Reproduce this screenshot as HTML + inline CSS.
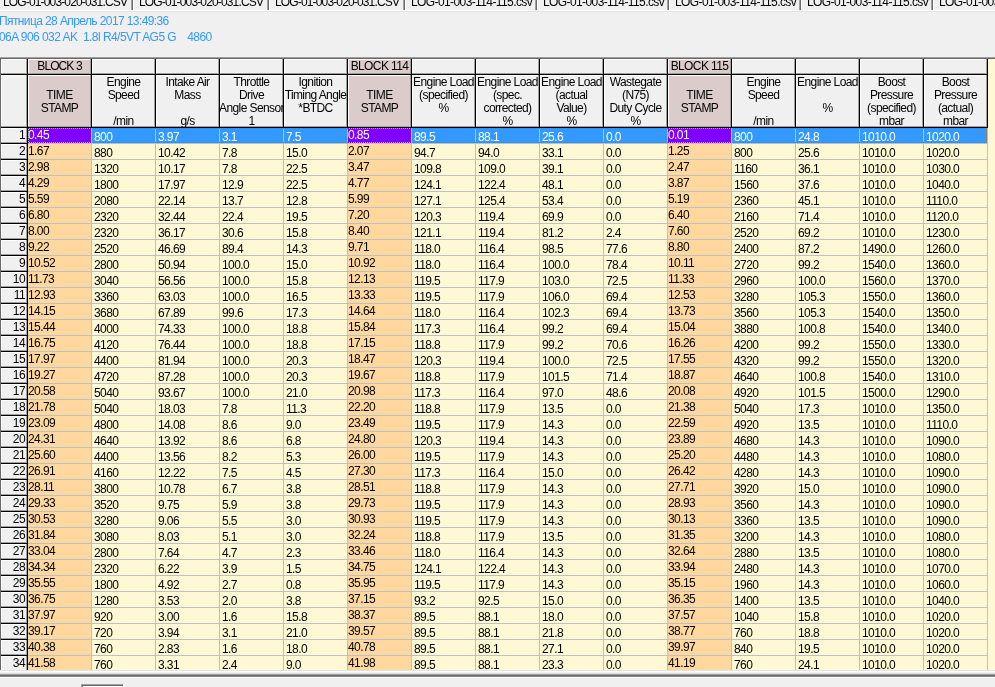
<!DOCTYPE html>
<html><head><meta charset="utf-8"><style>
html,body{margin:0;padding:0}
body{width:995px;height:687px;position:relative;overflow:hidden;background:#f0f0f0;font-family:"Liberation Sans",sans-serif}
#w{position:absolute;left:0;top:0;width:995px;height:687px;overflow:hidden;will-change:transform}
i{position:absolute;display:block}
.t{position:absolute;font-weight:normal;font-size:12px;letter-spacing:-0.6px;line-height:15px;white-space:pre;color:#000}
.c{text-align:center}
.clip{position:absolute;overflow:hidden}
</style></head><body><div id="w">
<b class="t" style="left:3px;top:-5px;letter-spacing:-0.85px">LOG-01-003-020-031.CSV</b><b class="t" style="left:139px;top:-5px;letter-spacing:-0.85px">LOG-01-003-020-031.CSV</b><b class="t" style="left:275px;top:-5px;letter-spacing:-0.85px">LOG-01-003-020-031.CSV</b><b class="t" style="left:411px;top:-5px;letter-spacing:-0.6px">LOG-01-003-114-115.csv</b><b class="t" style="left:543px;top:-5px;letter-spacing:-0.6px">LOG-01-003-114-115.csv</b><b class="t" style="left:675px;top:-5px;letter-spacing:-0.6px">LOG-01-003-114-115.csv</b><b class="t" style="left:807px;top:-5px;letter-spacing:-0.6px">LOG-01-003-114-115.csv</b><b class="t" style="left:939px;top:-5px;letter-spacing:-0.6px">LOG-01-003-114-115.csv</b><i style="left:131px;top:0px;width:1px;height:10px;background:#a0a0a0"></i><i style="left:132px;top:0px;width:1px;height:10px;background:#696969"></i><i style="left:133px;top:0px;width:1px;height:10px;background:#fff"></i><i style="left:267px;top:0px;width:1px;height:10px;background:#a0a0a0"></i><i style="left:268px;top:0px;width:1px;height:10px;background:#696969"></i><i style="left:269px;top:0px;width:1px;height:10px;background:#fff"></i><i style="left:403px;top:0px;width:1px;height:10px;background:#a0a0a0"></i><i style="left:404px;top:0px;width:1px;height:10px;background:#696969"></i><i style="left:405px;top:0px;width:1px;height:10px;background:#fff"></i><i style="left:535px;top:0px;width:1px;height:10px;background:#a0a0a0"></i><i style="left:536px;top:0px;width:1px;height:10px;background:#696969"></i><i style="left:537px;top:0px;width:1px;height:10px;background:#fff"></i><i style="left:667px;top:0px;width:1px;height:10px;background:#a0a0a0"></i><i style="left:668px;top:0px;width:1px;height:10px;background:#696969"></i><i style="left:669px;top:0px;width:1px;height:10px;background:#fff"></i><i style="left:799px;top:0px;width:1px;height:10px;background:#a0a0a0"></i><i style="left:800px;top:0px;width:1px;height:10px;background:#696969"></i><i style="left:801px;top:0px;width:1px;height:10px;background:#fff"></i><i style="left:931px;top:0px;width:1px;height:10px;background:#a0a0a0"></i><i style="left:932px;top:0px;width:1px;height:10px;background:#696969"></i><i style="left:933px;top:0px;width:1px;height:10px;background:#fff"></i><i style="left:0px;top:10px;width:995px;height:1px;background:#fff"></i><i style="left:0px;top:11px;width:995px;height:1px;background:#e3e3e3"></i><b class="t" style="left:-1px;top:14px;color:#3399ff">Пятница 28 Апрель 2017 13:49:36</b><b class="t" style="left:-1px;top:30px;letter-spacing:-0.55px;color:#3399ff">06A 906 032 AK  1.8l R4/5VT AG5 G    4860</b><i style="left:0px;top:57px;width:995px;height:1px;background:#a0a0a0"></i><i style="left:0px;top:58px;width:995px;height:1px;background:#696969"></i><i style="left:0px;top:59px;width:1px;height:611px;background:#696969"></i><i style="left:1px;top:59px;width:994px;height:611px;background:#fff8d5"></i><i style="left:27px;top:59px;width:1px;height:69px;background:#000"></i><i style="left:91px;top:59px;width:1px;height:69px;background:#000"></i><i style="left:155px;top:59px;width:1px;height:69px;background:#000"></i><i style="left:219px;top:59px;width:1px;height:69px;background:#000"></i><i style="left:283px;top:59px;width:1px;height:69px;background:#000"></i><i style="left:347px;top:59px;width:1px;height:69px;background:#000"></i><i style="left:411px;top:59px;width:1px;height:69px;background:#000"></i><i style="left:475px;top:59px;width:1px;height:69px;background:#000"></i><i style="left:539px;top:59px;width:1px;height:69px;background:#000"></i><i style="left:603px;top:59px;width:1px;height:69px;background:#000"></i><i style="left:667px;top:59px;width:1px;height:69px;background:#000"></i><i style="left:731px;top:59px;width:1px;height:69px;background:#000"></i><i style="left:795px;top:59px;width:1px;height:69px;background:#000"></i><i style="left:859px;top:59px;width:1px;height:69px;background:#000"></i><i style="left:923px;top:59px;width:1px;height:69px;background:#000"></i><i style="left:987px;top:59px;width:1px;height:69px;background:#000"></i><i style="left:1px;top:74px;width:987px;height:1px;background:#000"></i><i style="left:1px;top:127px;width:987px;height:1px;background:#000"></i><i style="left:1px;top:59px;width:26px;height:15px;background:#f0f0f0"></i><i style="left:1px;top:59px;width:26px;height:1px;background:#fff"></i><i style="left:1px;top:59px;width:1px;height:15px;background:#fff"></i><i style="left:1px;top:73px;width:26px;height:1px;background:#a0a0a0"></i><i style="left:26px;top:59px;width:1px;height:15px;background:#a0a0a0"></i><i style="left:1px;top:75px;width:26px;height:52px;background:#f0f0f0"></i><i style="left:1px;top:75px;width:26px;height:1px;background:#fff"></i><i style="left:1px;top:75px;width:1px;height:52px;background:#fff"></i><i style="left:1px;top:126px;width:26px;height:1px;background:#a0a0a0"></i><i style="left:26px;top:75px;width:1px;height:52px;background:#a0a0a0"></i><i style="left:28px;top:59px;width:63px;height:15px;background:#dbcbcb"></i><i style="left:28px;top:59px;width:63px;height:1px;background:#fff"></i><i style="left:28px;top:59px;width:1px;height:15px;background:#fff"></i><i style="left:28px;top:73px;width:63px;height:1px;background:#a0a0a0"></i><i style="left:90px;top:59px;width:1px;height:15px;background:#a0a0a0"></i><i style="left:28px;top:75px;width:63px;height:52px;background:#dbcbcb"></i><i style="left:28px;top:75px;width:63px;height:1px;background:#fff"></i><i style="left:28px;top:75px;width:1px;height:52px;background:#fff"></i><i style="left:28px;top:126px;width:63px;height:1px;background:#a0a0a0"></i><i style="left:90px;top:75px;width:1px;height:52px;background:#a0a0a0"></i><i style="left:92px;top:59px;width:63px;height:15px;background:#f0f0f0"></i><i style="left:92px;top:59px;width:63px;height:1px;background:#fff"></i><i style="left:92px;top:59px;width:1px;height:15px;background:#fff"></i><i style="left:92px;top:73px;width:63px;height:1px;background:#a0a0a0"></i><i style="left:154px;top:59px;width:1px;height:15px;background:#a0a0a0"></i><i style="left:92px;top:75px;width:63px;height:52px;background:#f0f0f0"></i><i style="left:92px;top:75px;width:63px;height:1px;background:#fff"></i><i style="left:92px;top:75px;width:1px;height:52px;background:#fff"></i><i style="left:92px;top:126px;width:63px;height:1px;background:#a0a0a0"></i><i style="left:154px;top:75px;width:1px;height:52px;background:#a0a0a0"></i><i style="left:156px;top:59px;width:63px;height:15px;background:#f0f0f0"></i><i style="left:156px;top:59px;width:63px;height:1px;background:#fff"></i><i style="left:156px;top:59px;width:1px;height:15px;background:#fff"></i><i style="left:156px;top:73px;width:63px;height:1px;background:#a0a0a0"></i><i style="left:218px;top:59px;width:1px;height:15px;background:#a0a0a0"></i><i style="left:156px;top:75px;width:63px;height:52px;background:#f0f0f0"></i><i style="left:156px;top:75px;width:63px;height:1px;background:#fff"></i><i style="left:156px;top:75px;width:1px;height:52px;background:#fff"></i><i style="left:156px;top:126px;width:63px;height:1px;background:#a0a0a0"></i><i style="left:218px;top:75px;width:1px;height:52px;background:#a0a0a0"></i><i style="left:220px;top:59px;width:63px;height:15px;background:#f0f0f0"></i><i style="left:220px;top:59px;width:63px;height:1px;background:#fff"></i><i style="left:220px;top:59px;width:1px;height:15px;background:#fff"></i><i style="left:220px;top:73px;width:63px;height:1px;background:#a0a0a0"></i><i style="left:282px;top:59px;width:1px;height:15px;background:#a0a0a0"></i><i style="left:220px;top:75px;width:63px;height:52px;background:#f0f0f0"></i><i style="left:220px;top:75px;width:63px;height:1px;background:#fff"></i><i style="left:220px;top:75px;width:1px;height:52px;background:#fff"></i><i style="left:220px;top:126px;width:63px;height:1px;background:#a0a0a0"></i><i style="left:282px;top:75px;width:1px;height:52px;background:#a0a0a0"></i><i style="left:284px;top:59px;width:63px;height:15px;background:#f0f0f0"></i><i style="left:284px;top:59px;width:63px;height:1px;background:#fff"></i><i style="left:284px;top:59px;width:1px;height:15px;background:#fff"></i><i style="left:284px;top:73px;width:63px;height:1px;background:#a0a0a0"></i><i style="left:346px;top:59px;width:1px;height:15px;background:#a0a0a0"></i><i style="left:284px;top:75px;width:63px;height:52px;background:#f0f0f0"></i><i style="left:284px;top:75px;width:63px;height:1px;background:#fff"></i><i style="left:284px;top:75px;width:1px;height:52px;background:#fff"></i><i style="left:284px;top:126px;width:63px;height:1px;background:#a0a0a0"></i><i style="left:346px;top:75px;width:1px;height:52px;background:#a0a0a0"></i><i style="left:348px;top:59px;width:63px;height:15px;background:#dbcbcb"></i><i style="left:348px;top:59px;width:63px;height:1px;background:#fff"></i><i style="left:348px;top:59px;width:1px;height:15px;background:#fff"></i><i style="left:348px;top:73px;width:63px;height:1px;background:#a0a0a0"></i><i style="left:410px;top:59px;width:1px;height:15px;background:#a0a0a0"></i><i style="left:348px;top:75px;width:63px;height:52px;background:#dbcbcb"></i><i style="left:348px;top:75px;width:63px;height:1px;background:#fff"></i><i style="left:348px;top:75px;width:1px;height:52px;background:#fff"></i><i style="left:348px;top:126px;width:63px;height:1px;background:#a0a0a0"></i><i style="left:410px;top:75px;width:1px;height:52px;background:#a0a0a0"></i><i style="left:412px;top:59px;width:63px;height:15px;background:#f0f0f0"></i><i style="left:412px;top:59px;width:63px;height:1px;background:#fff"></i><i style="left:412px;top:59px;width:1px;height:15px;background:#fff"></i><i style="left:412px;top:73px;width:63px;height:1px;background:#a0a0a0"></i><i style="left:474px;top:59px;width:1px;height:15px;background:#a0a0a0"></i><i style="left:412px;top:75px;width:63px;height:52px;background:#f0f0f0"></i><i style="left:412px;top:75px;width:63px;height:1px;background:#fff"></i><i style="left:412px;top:75px;width:1px;height:52px;background:#fff"></i><i style="left:412px;top:126px;width:63px;height:1px;background:#a0a0a0"></i><i style="left:474px;top:75px;width:1px;height:52px;background:#a0a0a0"></i><i style="left:476px;top:59px;width:63px;height:15px;background:#f0f0f0"></i><i style="left:476px;top:59px;width:63px;height:1px;background:#fff"></i><i style="left:476px;top:59px;width:1px;height:15px;background:#fff"></i><i style="left:476px;top:73px;width:63px;height:1px;background:#a0a0a0"></i><i style="left:538px;top:59px;width:1px;height:15px;background:#a0a0a0"></i><i style="left:476px;top:75px;width:63px;height:52px;background:#f0f0f0"></i><i style="left:476px;top:75px;width:63px;height:1px;background:#fff"></i><i style="left:476px;top:75px;width:1px;height:52px;background:#fff"></i><i style="left:476px;top:126px;width:63px;height:1px;background:#a0a0a0"></i><i style="left:538px;top:75px;width:1px;height:52px;background:#a0a0a0"></i><i style="left:540px;top:59px;width:63px;height:15px;background:#f0f0f0"></i><i style="left:540px;top:59px;width:63px;height:1px;background:#fff"></i><i style="left:540px;top:59px;width:1px;height:15px;background:#fff"></i><i style="left:540px;top:73px;width:63px;height:1px;background:#a0a0a0"></i><i style="left:602px;top:59px;width:1px;height:15px;background:#a0a0a0"></i><i style="left:540px;top:75px;width:63px;height:52px;background:#f0f0f0"></i><i style="left:540px;top:75px;width:63px;height:1px;background:#fff"></i><i style="left:540px;top:75px;width:1px;height:52px;background:#fff"></i><i style="left:540px;top:126px;width:63px;height:1px;background:#a0a0a0"></i><i style="left:602px;top:75px;width:1px;height:52px;background:#a0a0a0"></i><i style="left:604px;top:59px;width:63px;height:15px;background:#f0f0f0"></i><i style="left:604px;top:59px;width:63px;height:1px;background:#fff"></i><i style="left:604px;top:59px;width:1px;height:15px;background:#fff"></i><i style="left:604px;top:73px;width:63px;height:1px;background:#a0a0a0"></i><i style="left:666px;top:59px;width:1px;height:15px;background:#a0a0a0"></i><i style="left:604px;top:75px;width:63px;height:52px;background:#f0f0f0"></i><i style="left:604px;top:75px;width:63px;height:1px;background:#fff"></i><i style="left:604px;top:75px;width:1px;height:52px;background:#fff"></i><i style="left:604px;top:126px;width:63px;height:1px;background:#a0a0a0"></i><i style="left:666px;top:75px;width:1px;height:52px;background:#a0a0a0"></i><i style="left:668px;top:59px;width:63px;height:15px;background:#dbcbcb"></i><i style="left:668px;top:59px;width:63px;height:1px;background:#fff"></i><i style="left:668px;top:59px;width:1px;height:15px;background:#fff"></i><i style="left:668px;top:73px;width:63px;height:1px;background:#a0a0a0"></i><i style="left:730px;top:59px;width:1px;height:15px;background:#a0a0a0"></i><i style="left:668px;top:75px;width:63px;height:52px;background:#dbcbcb"></i><i style="left:668px;top:75px;width:63px;height:1px;background:#fff"></i><i style="left:668px;top:75px;width:1px;height:52px;background:#fff"></i><i style="left:668px;top:126px;width:63px;height:1px;background:#a0a0a0"></i><i style="left:730px;top:75px;width:1px;height:52px;background:#a0a0a0"></i><i style="left:732px;top:59px;width:63px;height:15px;background:#f0f0f0"></i><i style="left:732px;top:59px;width:63px;height:1px;background:#fff"></i><i style="left:732px;top:59px;width:1px;height:15px;background:#fff"></i><i style="left:732px;top:73px;width:63px;height:1px;background:#a0a0a0"></i><i style="left:794px;top:59px;width:1px;height:15px;background:#a0a0a0"></i><i style="left:732px;top:75px;width:63px;height:52px;background:#f0f0f0"></i><i style="left:732px;top:75px;width:63px;height:1px;background:#fff"></i><i style="left:732px;top:75px;width:1px;height:52px;background:#fff"></i><i style="left:732px;top:126px;width:63px;height:1px;background:#a0a0a0"></i><i style="left:794px;top:75px;width:1px;height:52px;background:#a0a0a0"></i><i style="left:796px;top:59px;width:63px;height:15px;background:#f0f0f0"></i><i style="left:796px;top:59px;width:63px;height:1px;background:#fff"></i><i style="left:796px;top:59px;width:1px;height:15px;background:#fff"></i><i style="left:796px;top:73px;width:63px;height:1px;background:#a0a0a0"></i><i style="left:858px;top:59px;width:1px;height:15px;background:#a0a0a0"></i><i style="left:796px;top:75px;width:63px;height:52px;background:#f0f0f0"></i><i style="left:796px;top:75px;width:63px;height:1px;background:#fff"></i><i style="left:796px;top:75px;width:1px;height:52px;background:#fff"></i><i style="left:796px;top:126px;width:63px;height:1px;background:#a0a0a0"></i><i style="left:858px;top:75px;width:1px;height:52px;background:#a0a0a0"></i><i style="left:860px;top:59px;width:63px;height:15px;background:#f0f0f0"></i><i style="left:860px;top:59px;width:63px;height:1px;background:#fff"></i><i style="left:860px;top:59px;width:1px;height:15px;background:#fff"></i><i style="left:860px;top:73px;width:63px;height:1px;background:#a0a0a0"></i><i style="left:922px;top:59px;width:1px;height:15px;background:#a0a0a0"></i><i style="left:860px;top:75px;width:63px;height:52px;background:#f0f0f0"></i><i style="left:860px;top:75px;width:63px;height:1px;background:#fff"></i><i style="left:860px;top:75px;width:1px;height:52px;background:#fff"></i><i style="left:860px;top:126px;width:63px;height:1px;background:#a0a0a0"></i><i style="left:922px;top:75px;width:1px;height:52px;background:#a0a0a0"></i><i style="left:924px;top:59px;width:63px;height:15px;background:#f0f0f0"></i><i style="left:924px;top:59px;width:63px;height:1px;background:#fff"></i><i style="left:924px;top:59px;width:1px;height:15px;background:#fff"></i><i style="left:924px;top:73px;width:63px;height:1px;background:#a0a0a0"></i><i style="left:986px;top:59px;width:1px;height:15px;background:#a0a0a0"></i><i style="left:924px;top:75px;width:63px;height:52px;background:#f0f0f0"></i><i style="left:924px;top:75px;width:63px;height:1px;background:#fff"></i><i style="left:924px;top:75px;width:1px;height:52px;background:#fff"></i><i style="left:924px;top:126px;width:63px;height:1px;background:#a0a0a0"></i><i style="left:986px;top:75px;width:1px;height:52px;background:#a0a0a0"></i><div class="clip" style="left:28px;top:59px;width:63px;height:15px"><b class="t c" style="left:-5px;letter-spacing:-0.9px;top:0px;width:73px">BLOCK 3</b></div><div class="clip" style="left:28px;top:75px;width:63px;height:52px"><b class="t c" style="left:-20px;top:13px;width:103px">TIME</b><b class="t c" style="left:-20px;top:26px;width:103px">STAMP</b></div><div class="clip" style="left:92px;top:59px;width:63px;height:15px"></div><div class="clip" style="left:92px;top:75px;width:63px;height:52px"><b class="t c" style="left:-20px;top:0px;width:103px">Engine</b><b class="t c" style="left:-20px;top:13px;width:103px">Speed</b><b class="t c" style="left:-20px;top:39px;width:103px">/min</b></div><div class="clip" style="left:156px;top:59px;width:63px;height:15px"></div><div class="clip" style="left:156px;top:75px;width:63px;height:52px"><b class="t c" style="left:-20px;top:0px;width:103px">Intake Air</b><b class="t c" style="left:-20px;top:13px;width:103px">Mass</b><b class="t c" style="left:-20px;top:39px;width:103px">g/s</b></div><div class="clip" style="left:220px;top:59px;width:63px;height:15px"></div><div class="clip" style="left:220px;top:75px;width:63px;height:52px"><b class="t c" style="left:-20px;top:0px;width:103px">Throttle</b><b class="t c" style="left:-20px;top:13px;width:103px">Drive</b><b class="t c" style="left:-20px;top:26px;width:103px">Angle Sensor</b><b class="t c" style="left:-20px;top:39px;width:103px">1</b></div><div class="clip" style="left:284px;top:59px;width:63px;height:15px"></div><div class="clip" style="left:284px;top:75px;width:63px;height:52px"><b class="t c" style="left:-20px;top:0px;width:103px">Ignition</b><b class="t c" style="left:-20px;top:13px;width:103px">Timing Angle</b><b class="t c" style="left:-20px;top:26px;width:103px">*BTDC</b></div><div class="clip" style="left:348px;top:59px;width:63px;height:15px"><b class="t c" style="left:-5px;letter-spacing:-0.6px;top:0px;width:73px">BLOCK 114</b></div><div class="clip" style="left:348px;top:75px;width:63px;height:52px"><b class="t c" style="left:-20px;top:13px;width:103px">TIME</b><b class="t c" style="left:-20px;top:26px;width:103px">STAMP</b></div><div class="clip" style="left:412px;top:59px;width:63px;height:15px"></div><div class="clip" style="left:412px;top:75px;width:63px;height:52px"><b class="t c" style="left:-20px;top:0px;width:103px">Engine Load</b><b class="t c" style="left:-20px;top:13px;width:103px">(specified)</b><b class="t c" style="left:-20px;top:26px;width:103px">%</b></div><div class="clip" style="left:476px;top:59px;width:63px;height:15px"></div><div class="clip" style="left:476px;top:75px;width:63px;height:52px"><b class="t c" style="left:-20px;top:0px;width:103px">Engine Load</b><b class="t c" style="left:-20px;top:13px;width:103px">(spec.</b><b class="t c" style="left:-20px;top:26px;width:103px">corrected)</b><b class="t c" style="left:-20px;top:39px;width:103px">%</b></div><div class="clip" style="left:540px;top:59px;width:63px;height:15px"></div><div class="clip" style="left:540px;top:75px;width:63px;height:52px"><b class="t c" style="left:-20px;top:0px;width:103px">Engine Load</b><b class="t c" style="left:-20px;top:13px;width:103px">(actual</b><b class="t c" style="left:-20px;top:26px;width:103px">Value)</b><b class="t c" style="left:-20px;top:39px;width:103px">%</b></div><div class="clip" style="left:604px;top:59px;width:63px;height:15px"></div><div class="clip" style="left:604px;top:75px;width:63px;height:52px"><b class="t c" style="left:-20px;top:0px;width:103px">Wastegate</b><b class="t c" style="left:-20px;top:13px;width:103px">(N75)</b><b class="t c" style="left:-20px;top:26px;width:103px">Duty Cycle</b><b class="t c" style="left:-20px;top:39px;width:103px">%</b></div><div class="clip" style="left:668px;top:59px;width:63px;height:15px"><b class="t c" style="left:-5px;letter-spacing:-0.6px;top:0px;width:73px">BLOCK 115</b></div><div class="clip" style="left:668px;top:75px;width:63px;height:52px"><b class="t c" style="left:-20px;top:13px;width:103px">TIME</b><b class="t c" style="left:-20px;top:26px;width:103px">STAMP</b></div><div class="clip" style="left:732px;top:59px;width:63px;height:15px"></div><div class="clip" style="left:732px;top:75px;width:63px;height:52px"><b class="t c" style="left:-20px;top:0px;width:103px">Engine</b><b class="t c" style="left:-20px;top:13px;width:103px">Speed</b><b class="t c" style="left:-20px;top:39px;width:103px">/min</b></div><div class="clip" style="left:796px;top:59px;width:63px;height:15px"></div><div class="clip" style="left:796px;top:75px;width:63px;height:52px"><b class="t c" style="left:-20px;top:0px;width:103px">Engine Load</b><b class="t c" style="left:-20px;top:26px;width:103px">%</b></div><div class="clip" style="left:860px;top:59px;width:63px;height:15px"></div><div class="clip" style="left:860px;top:75px;width:63px;height:52px"><b class="t c" style="left:-20px;top:0px;width:103px">Boost</b><b class="t c" style="left:-20px;top:13px;width:103px">Pressure</b><b class="t c" style="left:-20px;top:26px;width:103px">(specified)</b><b class="t c" style="left:-20px;top:39px;width:103px">mbar</b></div><div class="clip" style="left:924px;top:59px;width:63px;height:15px"></div><div class="clip" style="left:924px;top:75px;width:63px;height:52px"><b class="t c" style="left:-20px;top:0px;width:103px">Boost</b><b class="t c" style="left:-20px;top:13px;width:103px">Pressure</b><b class="t c" style="left:-20px;top:26px;width:103px">(actual)</b><b class="t c" style="left:-20px;top:39px;width:103px">mbar</b></div><i style="left:1px;top:128px;width:26px;height:15px;background:#f0f0f0"></i><i style="left:1px;top:128px;width:26px;height:1px;background:#fff"></i><i style="left:1px;top:128px;width:1px;height:15px;background:#fff"></i><i style="left:1px;top:142px;width:26px;height:1px;background:#a0a0a0"></i><i style="left:26px;top:128px;width:1px;height:15px;background:#a0a0a0"></i><i style="left:1px;top:143px;width:26px;height:1px;background:#000"></i><i style="left:27px;top:128px;width:1px;height:16px;background:#000"></i><b class="t" style="left:0px;top:128px;width:25px;text-align:right">1</b><i style="left:28px;top:128px;width:63px;height:15px;background:#8000ff"></i><b class="t" style="left:28px;top:128px;color:#fff">0.45</b><i style="left:91px;top:128px;width:1px;height:16px;background:#c0c0c0"></i><i style="left:92px;top:128px;width:63px;height:15px;background:#3399ff"></i><b class="t" style="left:94px;top:130px;color:#fff">800</b><i style="left:155px;top:128px;width:1px;height:16px;background:#c0c0c0"></i><i style="left:156px;top:128px;width:63px;height:15px;background:#3399ff"></i><b class="t" style="left:158px;top:130px;color:#fff">3.97</b><i style="left:219px;top:128px;width:1px;height:16px;background:#c0c0c0"></i><i style="left:220px;top:128px;width:63px;height:15px;background:#3399ff"></i><b class="t" style="left:222px;top:130px;color:#fff">3.1</b><i style="left:283px;top:128px;width:1px;height:16px;background:#c0c0c0"></i><i style="left:284px;top:128px;width:63px;height:15px;background:#3399ff"></i><b class="t" style="left:286px;top:130px;color:#fff">7.5</b><i style="left:347px;top:128px;width:1px;height:16px;background:#c0c0c0"></i><i style="left:348px;top:128px;width:63px;height:15px;background:#8000ff"></i><b class="t" style="left:348px;top:128px;color:#fff">0.85</b><i style="left:411px;top:128px;width:1px;height:16px;background:#c0c0c0"></i><i style="left:412px;top:128px;width:63px;height:15px;background:#3399ff"></i><b class="t" style="left:414px;top:130px;color:#fff">89.5</b><i style="left:475px;top:128px;width:1px;height:16px;background:#c0c0c0"></i><i style="left:476px;top:128px;width:63px;height:15px;background:#3399ff"></i><b class="t" style="left:478px;top:130px;color:#fff">88.1</b><i style="left:539px;top:128px;width:1px;height:16px;background:#c0c0c0"></i><i style="left:540px;top:128px;width:63px;height:15px;background:#3399ff"></i><b class="t" style="left:542px;top:130px;color:#fff">25.6</b><i style="left:603px;top:128px;width:1px;height:16px;background:#c0c0c0"></i><i style="left:604px;top:128px;width:63px;height:15px;background:#3399ff"></i><b class="t" style="left:606px;top:130px;color:#fff">0.0</b><i style="left:667px;top:128px;width:1px;height:16px;background:#c0c0c0"></i><i style="left:668px;top:128px;width:63px;height:15px;background:#8000ff"></i><b class="t" style="left:668px;top:128px;color:#fff">0.01</b><i style="left:731px;top:128px;width:1px;height:16px;background:#c0c0c0"></i><i style="left:732px;top:128px;width:63px;height:15px;background:#3399ff"></i><b class="t" style="left:734px;top:130px;color:#fff">800</b><i style="left:795px;top:128px;width:1px;height:16px;background:#c0c0c0"></i><i style="left:796px;top:128px;width:63px;height:15px;background:#3399ff"></i><b class="t" style="left:798px;top:130px;color:#fff">24.8</b><i style="left:859px;top:128px;width:1px;height:16px;background:#c0c0c0"></i><i style="left:860px;top:128px;width:63px;height:15px;background:#3399ff"></i><b class="t" style="left:862px;top:130px;color:#fff">1010.0</b><i style="left:923px;top:128px;width:1px;height:16px;background:#c0c0c0"></i><i style="left:924px;top:128px;width:63px;height:15px;background:#3399ff"></i><b class="t" style="left:926px;top:130px;color:#fff">1020.0</b><i style="left:987px;top:128px;width:1px;height:16px;background:#c0c0c0"></i><i style="left:28px;top:143px;width:960px;height:1px;background:#c0c0c0"></i><i style="left:1px;top:144px;width:26px;height:15px;background:#f0f0f0"></i><i style="left:1px;top:144px;width:26px;height:1px;background:#fff"></i><i style="left:1px;top:144px;width:1px;height:15px;background:#fff"></i><i style="left:1px;top:158px;width:26px;height:1px;background:#a0a0a0"></i><i style="left:26px;top:144px;width:1px;height:15px;background:#a0a0a0"></i><i style="left:1px;top:159px;width:26px;height:1px;background:#000"></i><i style="left:27px;top:144px;width:1px;height:16px;background:#000"></i><b class="t" style="left:0px;top:144px;width:25px;text-align:right">2</b><i style="left:28px;top:144px;width:63px;height:15px;background:#ffd8a0"></i><b class="t" style="left:28px;top:144px">1.67</b><i style="left:91px;top:144px;width:1px;height:16px;background:#c0c0c0"></i><i style="left:92px;top:144px;width:63px;height:15px;background:#fff8d5"></i><b class="t" style="left:94px;top:146px">880</b><i style="left:155px;top:144px;width:1px;height:16px;background:#c0c0c0"></i><i style="left:156px;top:144px;width:63px;height:15px;background:#fff8d5"></i><b class="t" style="left:158px;top:146px">10.42</b><i style="left:219px;top:144px;width:1px;height:16px;background:#c0c0c0"></i><i style="left:220px;top:144px;width:63px;height:15px;background:#fff8d5"></i><b class="t" style="left:222px;top:146px">7.8</b><i style="left:283px;top:144px;width:1px;height:16px;background:#c0c0c0"></i><i style="left:284px;top:144px;width:63px;height:15px;background:#fff8d5"></i><b class="t" style="left:286px;top:146px">15.0</b><i style="left:347px;top:144px;width:1px;height:16px;background:#c0c0c0"></i><i style="left:348px;top:144px;width:63px;height:15px;background:#ffd8a0"></i><b class="t" style="left:348px;top:144px">2.07</b><i style="left:411px;top:144px;width:1px;height:16px;background:#c0c0c0"></i><i style="left:412px;top:144px;width:63px;height:15px;background:#fff8d5"></i><b class="t" style="left:414px;top:146px">94.7</b><i style="left:475px;top:144px;width:1px;height:16px;background:#c0c0c0"></i><i style="left:476px;top:144px;width:63px;height:15px;background:#fff8d5"></i><b class="t" style="left:478px;top:146px">94.0</b><i style="left:539px;top:144px;width:1px;height:16px;background:#c0c0c0"></i><i style="left:540px;top:144px;width:63px;height:15px;background:#fff8d5"></i><b class="t" style="left:542px;top:146px">33.1</b><i style="left:603px;top:144px;width:1px;height:16px;background:#c0c0c0"></i><i style="left:604px;top:144px;width:63px;height:15px;background:#fff8d5"></i><b class="t" style="left:606px;top:146px">0.0</b><i style="left:667px;top:144px;width:1px;height:16px;background:#c0c0c0"></i><i style="left:668px;top:144px;width:63px;height:15px;background:#ffd8a0"></i><b class="t" style="left:668px;top:144px">1.25</b><i style="left:731px;top:144px;width:1px;height:16px;background:#c0c0c0"></i><i style="left:732px;top:144px;width:63px;height:15px;background:#fff8d5"></i><b class="t" style="left:734px;top:146px">800</b><i style="left:795px;top:144px;width:1px;height:16px;background:#c0c0c0"></i><i style="left:796px;top:144px;width:63px;height:15px;background:#fff8d5"></i><b class="t" style="left:798px;top:146px">25.6</b><i style="left:859px;top:144px;width:1px;height:16px;background:#c0c0c0"></i><i style="left:860px;top:144px;width:63px;height:15px;background:#fff8d5"></i><b class="t" style="left:862px;top:146px">1010.0</b><i style="left:923px;top:144px;width:1px;height:16px;background:#c0c0c0"></i><i style="left:924px;top:144px;width:63px;height:15px;background:#fff8d5"></i><b class="t" style="left:926px;top:146px">1020.0</b><i style="left:987px;top:144px;width:1px;height:16px;background:#c0c0c0"></i><i style="left:28px;top:159px;width:960px;height:1px;background:#c0c0c0"></i><i style="left:1px;top:160px;width:26px;height:15px;background:#f0f0f0"></i><i style="left:1px;top:160px;width:26px;height:1px;background:#fff"></i><i style="left:1px;top:160px;width:1px;height:15px;background:#fff"></i><i style="left:1px;top:174px;width:26px;height:1px;background:#a0a0a0"></i><i style="left:26px;top:160px;width:1px;height:15px;background:#a0a0a0"></i><i style="left:1px;top:175px;width:26px;height:1px;background:#000"></i><i style="left:27px;top:160px;width:1px;height:16px;background:#000"></i><b class="t" style="left:0px;top:160px;width:25px;text-align:right">3</b><i style="left:28px;top:160px;width:63px;height:15px;background:#ffd8a0"></i><b class="t" style="left:28px;top:160px">2.98</b><i style="left:91px;top:160px;width:1px;height:16px;background:#c0c0c0"></i><i style="left:92px;top:160px;width:63px;height:15px;background:#fff8d5"></i><b class="t" style="left:94px;top:162px">1320</b><i style="left:155px;top:160px;width:1px;height:16px;background:#c0c0c0"></i><i style="left:156px;top:160px;width:63px;height:15px;background:#fff8d5"></i><b class="t" style="left:158px;top:162px">10.17</b><i style="left:219px;top:160px;width:1px;height:16px;background:#c0c0c0"></i><i style="left:220px;top:160px;width:63px;height:15px;background:#fff8d5"></i><b class="t" style="left:222px;top:162px">7.8</b><i style="left:283px;top:160px;width:1px;height:16px;background:#c0c0c0"></i><i style="left:284px;top:160px;width:63px;height:15px;background:#fff8d5"></i><b class="t" style="left:286px;top:162px">22.5</b><i style="left:347px;top:160px;width:1px;height:16px;background:#c0c0c0"></i><i style="left:348px;top:160px;width:63px;height:15px;background:#ffd8a0"></i><b class="t" style="left:348px;top:160px">3.47</b><i style="left:411px;top:160px;width:1px;height:16px;background:#c0c0c0"></i><i style="left:412px;top:160px;width:63px;height:15px;background:#fff8d5"></i><b class="t" style="left:414px;top:162px">109.8</b><i style="left:475px;top:160px;width:1px;height:16px;background:#c0c0c0"></i><i style="left:476px;top:160px;width:63px;height:15px;background:#fff8d5"></i><b class="t" style="left:478px;top:162px">109.0</b><i style="left:539px;top:160px;width:1px;height:16px;background:#c0c0c0"></i><i style="left:540px;top:160px;width:63px;height:15px;background:#fff8d5"></i><b class="t" style="left:542px;top:162px">39.1</b><i style="left:603px;top:160px;width:1px;height:16px;background:#c0c0c0"></i><i style="left:604px;top:160px;width:63px;height:15px;background:#fff8d5"></i><b class="t" style="left:606px;top:162px">0.0</b><i style="left:667px;top:160px;width:1px;height:16px;background:#c0c0c0"></i><i style="left:668px;top:160px;width:63px;height:15px;background:#ffd8a0"></i><b class="t" style="left:668px;top:160px">2.47</b><i style="left:731px;top:160px;width:1px;height:16px;background:#c0c0c0"></i><i style="left:732px;top:160px;width:63px;height:15px;background:#fff8d5"></i><b class="t" style="left:734px;top:162px">1160</b><i style="left:795px;top:160px;width:1px;height:16px;background:#c0c0c0"></i><i style="left:796px;top:160px;width:63px;height:15px;background:#fff8d5"></i><b class="t" style="left:798px;top:162px">36.1</b><i style="left:859px;top:160px;width:1px;height:16px;background:#c0c0c0"></i><i style="left:860px;top:160px;width:63px;height:15px;background:#fff8d5"></i><b class="t" style="left:862px;top:162px">1010.0</b><i style="left:923px;top:160px;width:1px;height:16px;background:#c0c0c0"></i><i style="left:924px;top:160px;width:63px;height:15px;background:#fff8d5"></i><b class="t" style="left:926px;top:162px">1030.0</b><i style="left:987px;top:160px;width:1px;height:16px;background:#c0c0c0"></i><i style="left:28px;top:175px;width:960px;height:1px;background:#c0c0c0"></i><i style="left:1px;top:176px;width:26px;height:15px;background:#f0f0f0"></i><i style="left:1px;top:176px;width:26px;height:1px;background:#fff"></i><i style="left:1px;top:176px;width:1px;height:15px;background:#fff"></i><i style="left:1px;top:190px;width:26px;height:1px;background:#a0a0a0"></i><i style="left:26px;top:176px;width:1px;height:15px;background:#a0a0a0"></i><i style="left:1px;top:191px;width:26px;height:1px;background:#000"></i><i style="left:27px;top:176px;width:1px;height:16px;background:#000"></i><b class="t" style="left:0px;top:176px;width:25px;text-align:right">4</b><i style="left:28px;top:176px;width:63px;height:15px;background:#ffd8a0"></i><b class="t" style="left:28px;top:176px">4.29</b><i style="left:91px;top:176px;width:1px;height:16px;background:#c0c0c0"></i><i style="left:92px;top:176px;width:63px;height:15px;background:#fff8d5"></i><b class="t" style="left:94px;top:178px">1800</b><i style="left:155px;top:176px;width:1px;height:16px;background:#c0c0c0"></i><i style="left:156px;top:176px;width:63px;height:15px;background:#fff8d5"></i><b class="t" style="left:158px;top:178px">17.97</b><i style="left:219px;top:176px;width:1px;height:16px;background:#c0c0c0"></i><i style="left:220px;top:176px;width:63px;height:15px;background:#fff8d5"></i><b class="t" style="left:222px;top:178px">12.9</b><i style="left:283px;top:176px;width:1px;height:16px;background:#c0c0c0"></i><i style="left:284px;top:176px;width:63px;height:15px;background:#fff8d5"></i><b class="t" style="left:286px;top:178px">22.5</b><i style="left:347px;top:176px;width:1px;height:16px;background:#c0c0c0"></i><i style="left:348px;top:176px;width:63px;height:15px;background:#ffd8a0"></i><b class="t" style="left:348px;top:176px">4.77</b><i style="left:411px;top:176px;width:1px;height:16px;background:#c0c0c0"></i><i style="left:412px;top:176px;width:63px;height:15px;background:#fff8d5"></i><b class="t" style="left:414px;top:178px">124.1</b><i style="left:475px;top:176px;width:1px;height:16px;background:#c0c0c0"></i><i style="left:476px;top:176px;width:63px;height:15px;background:#fff8d5"></i><b class="t" style="left:478px;top:178px">122.4</b><i style="left:539px;top:176px;width:1px;height:16px;background:#c0c0c0"></i><i style="left:540px;top:176px;width:63px;height:15px;background:#fff8d5"></i><b class="t" style="left:542px;top:178px">48.1</b><i style="left:603px;top:176px;width:1px;height:16px;background:#c0c0c0"></i><i style="left:604px;top:176px;width:63px;height:15px;background:#fff8d5"></i><b class="t" style="left:606px;top:178px">0.0</b><i style="left:667px;top:176px;width:1px;height:16px;background:#c0c0c0"></i><i style="left:668px;top:176px;width:63px;height:15px;background:#ffd8a0"></i><b class="t" style="left:668px;top:176px">3.87</b><i style="left:731px;top:176px;width:1px;height:16px;background:#c0c0c0"></i><i style="left:732px;top:176px;width:63px;height:15px;background:#fff8d5"></i><b class="t" style="left:734px;top:178px">1560</b><i style="left:795px;top:176px;width:1px;height:16px;background:#c0c0c0"></i><i style="left:796px;top:176px;width:63px;height:15px;background:#fff8d5"></i><b class="t" style="left:798px;top:178px">37.6</b><i style="left:859px;top:176px;width:1px;height:16px;background:#c0c0c0"></i><i style="left:860px;top:176px;width:63px;height:15px;background:#fff8d5"></i><b class="t" style="left:862px;top:178px">1010.0</b><i style="left:923px;top:176px;width:1px;height:16px;background:#c0c0c0"></i><i style="left:924px;top:176px;width:63px;height:15px;background:#fff8d5"></i><b class="t" style="left:926px;top:178px">1040.0</b><i style="left:987px;top:176px;width:1px;height:16px;background:#c0c0c0"></i><i style="left:28px;top:191px;width:960px;height:1px;background:#c0c0c0"></i><i style="left:1px;top:192px;width:26px;height:15px;background:#f0f0f0"></i><i style="left:1px;top:192px;width:26px;height:1px;background:#fff"></i><i style="left:1px;top:192px;width:1px;height:15px;background:#fff"></i><i style="left:1px;top:206px;width:26px;height:1px;background:#a0a0a0"></i><i style="left:26px;top:192px;width:1px;height:15px;background:#a0a0a0"></i><i style="left:1px;top:207px;width:26px;height:1px;background:#000"></i><i style="left:27px;top:192px;width:1px;height:16px;background:#000"></i><b class="t" style="left:0px;top:192px;width:25px;text-align:right">5</b><i style="left:28px;top:192px;width:63px;height:15px;background:#ffd8a0"></i><b class="t" style="left:28px;top:192px">5.59</b><i style="left:91px;top:192px;width:1px;height:16px;background:#c0c0c0"></i><i style="left:92px;top:192px;width:63px;height:15px;background:#fff8d5"></i><b class="t" style="left:94px;top:194px">2080</b><i style="left:155px;top:192px;width:1px;height:16px;background:#c0c0c0"></i><i style="left:156px;top:192px;width:63px;height:15px;background:#fff8d5"></i><b class="t" style="left:158px;top:194px">22.14</b><i style="left:219px;top:192px;width:1px;height:16px;background:#c0c0c0"></i><i style="left:220px;top:192px;width:63px;height:15px;background:#fff8d5"></i><b class="t" style="left:222px;top:194px">13.7</b><i style="left:283px;top:192px;width:1px;height:16px;background:#c0c0c0"></i><i style="left:284px;top:192px;width:63px;height:15px;background:#fff8d5"></i><b class="t" style="left:286px;top:194px">12.8</b><i style="left:347px;top:192px;width:1px;height:16px;background:#c0c0c0"></i><i style="left:348px;top:192px;width:63px;height:15px;background:#ffd8a0"></i><b class="t" style="left:348px;top:192px">5.99</b><i style="left:411px;top:192px;width:1px;height:16px;background:#c0c0c0"></i><i style="left:412px;top:192px;width:63px;height:15px;background:#fff8d5"></i><b class="t" style="left:414px;top:194px">127.1</b><i style="left:475px;top:192px;width:1px;height:16px;background:#c0c0c0"></i><i style="left:476px;top:192px;width:63px;height:15px;background:#fff8d5"></i><b class="t" style="left:478px;top:194px">125.4</b><i style="left:539px;top:192px;width:1px;height:16px;background:#c0c0c0"></i><i style="left:540px;top:192px;width:63px;height:15px;background:#fff8d5"></i><b class="t" style="left:542px;top:194px">53.4</b><i style="left:603px;top:192px;width:1px;height:16px;background:#c0c0c0"></i><i style="left:604px;top:192px;width:63px;height:15px;background:#fff8d5"></i><b class="t" style="left:606px;top:194px">0.0</b><i style="left:667px;top:192px;width:1px;height:16px;background:#c0c0c0"></i><i style="left:668px;top:192px;width:63px;height:15px;background:#ffd8a0"></i><b class="t" style="left:668px;top:192px">5.19</b><i style="left:731px;top:192px;width:1px;height:16px;background:#c0c0c0"></i><i style="left:732px;top:192px;width:63px;height:15px;background:#fff8d5"></i><b class="t" style="left:734px;top:194px">2360</b><i style="left:795px;top:192px;width:1px;height:16px;background:#c0c0c0"></i><i style="left:796px;top:192px;width:63px;height:15px;background:#fff8d5"></i><b class="t" style="left:798px;top:194px">45.1</b><i style="left:859px;top:192px;width:1px;height:16px;background:#c0c0c0"></i><i style="left:860px;top:192px;width:63px;height:15px;background:#fff8d5"></i><b class="t" style="left:862px;top:194px">1010.0</b><i style="left:923px;top:192px;width:1px;height:16px;background:#c0c0c0"></i><i style="left:924px;top:192px;width:63px;height:15px;background:#fff8d5"></i><b class="t" style="left:926px;top:194px">1110.0</b><i style="left:987px;top:192px;width:1px;height:16px;background:#c0c0c0"></i><i style="left:28px;top:207px;width:960px;height:1px;background:#c0c0c0"></i><i style="left:1px;top:208px;width:26px;height:15px;background:#f0f0f0"></i><i style="left:1px;top:208px;width:26px;height:1px;background:#fff"></i><i style="left:1px;top:208px;width:1px;height:15px;background:#fff"></i><i style="left:1px;top:222px;width:26px;height:1px;background:#a0a0a0"></i><i style="left:26px;top:208px;width:1px;height:15px;background:#a0a0a0"></i><i style="left:1px;top:223px;width:26px;height:1px;background:#000"></i><i style="left:27px;top:208px;width:1px;height:16px;background:#000"></i><b class="t" style="left:0px;top:208px;width:25px;text-align:right">6</b><i style="left:28px;top:208px;width:63px;height:15px;background:#ffd8a0"></i><b class="t" style="left:28px;top:208px">6.80</b><i style="left:91px;top:208px;width:1px;height:16px;background:#c0c0c0"></i><i style="left:92px;top:208px;width:63px;height:15px;background:#fff8d5"></i><b class="t" style="left:94px;top:210px">2320</b><i style="left:155px;top:208px;width:1px;height:16px;background:#c0c0c0"></i><i style="left:156px;top:208px;width:63px;height:15px;background:#fff8d5"></i><b class="t" style="left:158px;top:210px">32.44</b><i style="left:219px;top:208px;width:1px;height:16px;background:#c0c0c0"></i><i style="left:220px;top:208px;width:63px;height:15px;background:#fff8d5"></i><b class="t" style="left:222px;top:210px">22.4</b><i style="left:283px;top:208px;width:1px;height:16px;background:#c0c0c0"></i><i style="left:284px;top:208px;width:63px;height:15px;background:#fff8d5"></i><b class="t" style="left:286px;top:210px">19.5</b><i style="left:347px;top:208px;width:1px;height:16px;background:#c0c0c0"></i><i style="left:348px;top:208px;width:63px;height:15px;background:#ffd8a0"></i><b class="t" style="left:348px;top:208px">7.20</b><i style="left:411px;top:208px;width:1px;height:16px;background:#c0c0c0"></i><i style="left:412px;top:208px;width:63px;height:15px;background:#fff8d5"></i><b class="t" style="left:414px;top:210px">120.3</b><i style="left:475px;top:208px;width:1px;height:16px;background:#c0c0c0"></i><i style="left:476px;top:208px;width:63px;height:15px;background:#fff8d5"></i><b class="t" style="left:478px;top:210px">119.4</b><i style="left:539px;top:208px;width:1px;height:16px;background:#c0c0c0"></i><i style="left:540px;top:208px;width:63px;height:15px;background:#fff8d5"></i><b class="t" style="left:542px;top:210px">69.9</b><i style="left:603px;top:208px;width:1px;height:16px;background:#c0c0c0"></i><i style="left:604px;top:208px;width:63px;height:15px;background:#fff8d5"></i><b class="t" style="left:606px;top:210px">0.0</b><i style="left:667px;top:208px;width:1px;height:16px;background:#c0c0c0"></i><i style="left:668px;top:208px;width:63px;height:15px;background:#ffd8a0"></i><b class="t" style="left:668px;top:208px">6.40</b><i style="left:731px;top:208px;width:1px;height:16px;background:#c0c0c0"></i><i style="left:732px;top:208px;width:63px;height:15px;background:#fff8d5"></i><b class="t" style="left:734px;top:210px">2160</b><i style="left:795px;top:208px;width:1px;height:16px;background:#c0c0c0"></i><i style="left:796px;top:208px;width:63px;height:15px;background:#fff8d5"></i><b class="t" style="left:798px;top:210px">71.4</b><i style="left:859px;top:208px;width:1px;height:16px;background:#c0c0c0"></i><i style="left:860px;top:208px;width:63px;height:15px;background:#fff8d5"></i><b class="t" style="left:862px;top:210px">1010.0</b><i style="left:923px;top:208px;width:1px;height:16px;background:#c0c0c0"></i><i style="left:924px;top:208px;width:63px;height:15px;background:#fff8d5"></i><b class="t" style="left:926px;top:210px">1120.0</b><i style="left:987px;top:208px;width:1px;height:16px;background:#c0c0c0"></i><i style="left:28px;top:223px;width:960px;height:1px;background:#c0c0c0"></i><i style="left:1px;top:224px;width:26px;height:15px;background:#f0f0f0"></i><i style="left:1px;top:224px;width:26px;height:1px;background:#fff"></i><i style="left:1px;top:224px;width:1px;height:15px;background:#fff"></i><i style="left:1px;top:238px;width:26px;height:1px;background:#a0a0a0"></i><i style="left:26px;top:224px;width:1px;height:15px;background:#a0a0a0"></i><i style="left:1px;top:239px;width:26px;height:1px;background:#000"></i><i style="left:27px;top:224px;width:1px;height:16px;background:#000"></i><b class="t" style="left:0px;top:224px;width:25px;text-align:right">7</b><i style="left:28px;top:224px;width:63px;height:15px;background:#ffd8a0"></i><b class="t" style="left:28px;top:224px">8.00</b><i style="left:91px;top:224px;width:1px;height:16px;background:#c0c0c0"></i><i style="left:92px;top:224px;width:63px;height:15px;background:#fff8d5"></i><b class="t" style="left:94px;top:226px">2320</b><i style="left:155px;top:224px;width:1px;height:16px;background:#c0c0c0"></i><i style="left:156px;top:224px;width:63px;height:15px;background:#fff8d5"></i><b class="t" style="left:158px;top:226px">36.17</b><i style="left:219px;top:224px;width:1px;height:16px;background:#c0c0c0"></i><i style="left:220px;top:224px;width:63px;height:15px;background:#fff8d5"></i><b class="t" style="left:222px;top:226px">30.6</b><i style="left:283px;top:224px;width:1px;height:16px;background:#c0c0c0"></i><i style="left:284px;top:224px;width:63px;height:15px;background:#fff8d5"></i><b class="t" style="left:286px;top:226px">15.8</b><i style="left:347px;top:224px;width:1px;height:16px;background:#c0c0c0"></i><i style="left:348px;top:224px;width:63px;height:15px;background:#ffd8a0"></i><b class="t" style="left:348px;top:224px">8.40</b><i style="left:411px;top:224px;width:1px;height:16px;background:#c0c0c0"></i><i style="left:412px;top:224px;width:63px;height:15px;background:#fff8d5"></i><b class="t" style="left:414px;top:226px">121.1</b><i style="left:475px;top:224px;width:1px;height:16px;background:#c0c0c0"></i><i style="left:476px;top:224px;width:63px;height:15px;background:#fff8d5"></i><b class="t" style="left:478px;top:226px">119.4</b><i style="left:539px;top:224px;width:1px;height:16px;background:#c0c0c0"></i><i style="left:540px;top:224px;width:63px;height:15px;background:#fff8d5"></i><b class="t" style="left:542px;top:226px">81.2</b><i style="left:603px;top:224px;width:1px;height:16px;background:#c0c0c0"></i><i style="left:604px;top:224px;width:63px;height:15px;background:#fff8d5"></i><b class="t" style="left:606px;top:226px">2.4</b><i style="left:667px;top:224px;width:1px;height:16px;background:#c0c0c0"></i><i style="left:668px;top:224px;width:63px;height:15px;background:#ffd8a0"></i><b class="t" style="left:668px;top:224px">7.60</b><i style="left:731px;top:224px;width:1px;height:16px;background:#c0c0c0"></i><i style="left:732px;top:224px;width:63px;height:15px;background:#fff8d5"></i><b class="t" style="left:734px;top:226px">2520</b><i style="left:795px;top:224px;width:1px;height:16px;background:#c0c0c0"></i><i style="left:796px;top:224px;width:63px;height:15px;background:#fff8d5"></i><b class="t" style="left:798px;top:226px">69.2</b><i style="left:859px;top:224px;width:1px;height:16px;background:#c0c0c0"></i><i style="left:860px;top:224px;width:63px;height:15px;background:#fff8d5"></i><b class="t" style="left:862px;top:226px">1010.0</b><i style="left:923px;top:224px;width:1px;height:16px;background:#c0c0c0"></i><i style="left:924px;top:224px;width:63px;height:15px;background:#fff8d5"></i><b class="t" style="left:926px;top:226px">1230.0</b><i style="left:987px;top:224px;width:1px;height:16px;background:#c0c0c0"></i><i style="left:28px;top:239px;width:960px;height:1px;background:#c0c0c0"></i><i style="left:1px;top:240px;width:26px;height:15px;background:#f0f0f0"></i><i style="left:1px;top:240px;width:26px;height:1px;background:#fff"></i><i style="left:1px;top:240px;width:1px;height:15px;background:#fff"></i><i style="left:1px;top:254px;width:26px;height:1px;background:#a0a0a0"></i><i style="left:26px;top:240px;width:1px;height:15px;background:#a0a0a0"></i><i style="left:1px;top:255px;width:26px;height:1px;background:#000"></i><i style="left:27px;top:240px;width:1px;height:16px;background:#000"></i><b class="t" style="left:0px;top:240px;width:25px;text-align:right">8</b><i style="left:28px;top:240px;width:63px;height:15px;background:#ffd8a0"></i><b class="t" style="left:28px;top:240px">9.22</b><i style="left:91px;top:240px;width:1px;height:16px;background:#c0c0c0"></i><i style="left:92px;top:240px;width:63px;height:15px;background:#fff8d5"></i><b class="t" style="left:94px;top:242px">2520</b><i style="left:155px;top:240px;width:1px;height:16px;background:#c0c0c0"></i><i style="left:156px;top:240px;width:63px;height:15px;background:#fff8d5"></i><b class="t" style="left:158px;top:242px">46.69</b><i style="left:219px;top:240px;width:1px;height:16px;background:#c0c0c0"></i><i style="left:220px;top:240px;width:63px;height:15px;background:#fff8d5"></i><b class="t" style="left:222px;top:242px">89.4</b><i style="left:283px;top:240px;width:1px;height:16px;background:#c0c0c0"></i><i style="left:284px;top:240px;width:63px;height:15px;background:#fff8d5"></i><b class="t" style="left:286px;top:242px">14.3</b><i style="left:347px;top:240px;width:1px;height:16px;background:#c0c0c0"></i><i style="left:348px;top:240px;width:63px;height:15px;background:#ffd8a0"></i><b class="t" style="left:348px;top:240px">9.71</b><i style="left:411px;top:240px;width:1px;height:16px;background:#c0c0c0"></i><i style="left:412px;top:240px;width:63px;height:15px;background:#fff8d5"></i><b class="t" style="left:414px;top:242px">118.0</b><i style="left:475px;top:240px;width:1px;height:16px;background:#c0c0c0"></i><i style="left:476px;top:240px;width:63px;height:15px;background:#fff8d5"></i><b class="t" style="left:478px;top:242px">116.4</b><i style="left:539px;top:240px;width:1px;height:16px;background:#c0c0c0"></i><i style="left:540px;top:240px;width:63px;height:15px;background:#fff8d5"></i><b class="t" style="left:542px;top:242px">98.5</b><i style="left:603px;top:240px;width:1px;height:16px;background:#c0c0c0"></i><i style="left:604px;top:240px;width:63px;height:15px;background:#fff8d5"></i><b class="t" style="left:606px;top:242px">77.6</b><i style="left:667px;top:240px;width:1px;height:16px;background:#c0c0c0"></i><i style="left:668px;top:240px;width:63px;height:15px;background:#ffd8a0"></i><b class="t" style="left:668px;top:240px">8.80</b><i style="left:731px;top:240px;width:1px;height:16px;background:#c0c0c0"></i><i style="left:732px;top:240px;width:63px;height:15px;background:#fff8d5"></i><b class="t" style="left:734px;top:242px">2400</b><i style="left:795px;top:240px;width:1px;height:16px;background:#c0c0c0"></i><i style="left:796px;top:240px;width:63px;height:15px;background:#fff8d5"></i><b class="t" style="left:798px;top:242px">87.2</b><i style="left:859px;top:240px;width:1px;height:16px;background:#c0c0c0"></i><i style="left:860px;top:240px;width:63px;height:15px;background:#fff8d5"></i><b class="t" style="left:862px;top:242px">1490.0</b><i style="left:923px;top:240px;width:1px;height:16px;background:#c0c0c0"></i><i style="left:924px;top:240px;width:63px;height:15px;background:#fff8d5"></i><b class="t" style="left:926px;top:242px">1260.0</b><i style="left:987px;top:240px;width:1px;height:16px;background:#c0c0c0"></i><i style="left:28px;top:255px;width:960px;height:1px;background:#c0c0c0"></i><i style="left:1px;top:256px;width:26px;height:15px;background:#f0f0f0"></i><i style="left:1px;top:256px;width:26px;height:1px;background:#fff"></i><i style="left:1px;top:256px;width:1px;height:15px;background:#fff"></i><i style="left:1px;top:270px;width:26px;height:1px;background:#a0a0a0"></i><i style="left:26px;top:256px;width:1px;height:15px;background:#a0a0a0"></i><i style="left:1px;top:271px;width:26px;height:1px;background:#000"></i><i style="left:27px;top:256px;width:1px;height:16px;background:#000"></i><b class="t" style="left:0px;top:256px;width:25px;text-align:right">9</b><i style="left:28px;top:256px;width:63px;height:15px;background:#ffd8a0"></i><b class="t" style="left:28px;top:256px">10.52</b><i style="left:91px;top:256px;width:1px;height:16px;background:#c0c0c0"></i><i style="left:92px;top:256px;width:63px;height:15px;background:#fff8d5"></i><b class="t" style="left:94px;top:258px">2800</b><i style="left:155px;top:256px;width:1px;height:16px;background:#c0c0c0"></i><i style="left:156px;top:256px;width:63px;height:15px;background:#fff8d5"></i><b class="t" style="left:158px;top:258px">50.94</b><i style="left:219px;top:256px;width:1px;height:16px;background:#c0c0c0"></i><i style="left:220px;top:256px;width:63px;height:15px;background:#fff8d5"></i><b class="t" style="left:222px;top:258px">100.0</b><i style="left:283px;top:256px;width:1px;height:16px;background:#c0c0c0"></i><i style="left:284px;top:256px;width:63px;height:15px;background:#fff8d5"></i><b class="t" style="left:286px;top:258px">15.0</b><i style="left:347px;top:256px;width:1px;height:16px;background:#c0c0c0"></i><i style="left:348px;top:256px;width:63px;height:15px;background:#ffd8a0"></i><b class="t" style="left:348px;top:256px">10.92</b><i style="left:411px;top:256px;width:1px;height:16px;background:#c0c0c0"></i><i style="left:412px;top:256px;width:63px;height:15px;background:#fff8d5"></i><b class="t" style="left:414px;top:258px">118.0</b><i style="left:475px;top:256px;width:1px;height:16px;background:#c0c0c0"></i><i style="left:476px;top:256px;width:63px;height:15px;background:#fff8d5"></i><b class="t" style="left:478px;top:258px">116.4</b><i style="left:539px;top:256px;width:1px;height:16px;background:#c0c0c0"></i><i style="left:540px;top:256px;width:63px;height:15px;background:#fff8d5"></i><b class="t" style="left:542px;top:258px">100.0</b><i style="left:603px;top:256px;width:1px;height:16px;background:#c0c0c0"></i><i style="left:604px;top:256px;width:63px;height:15px;background:#fff8d5"></i><b class="t" style="left:606px;top:258px">78.4</b><i style="left:667px;top:256px;width:1px;height:16px;background:#c0c0c0"></i><i style="left:668px;top:256px;width:63px;height:15px;background:#ffd8a0"></i><b class="t" style="left:668px;top:256px">10.11</b><i style="left:731px;top:256px;width:1px;height:16px;background:#c0c0c0"></i><i style="left:732px;top:256px;width:63px;height:15px;background:#fff8d5"></i><b class="t" style="left:734px;top:258px">2720</b><i style="left:795px;top:256px;width:1px;height:16px;background:#c0c0c0"></i><i style="left:796px;top:256px;width:63px;height:15px;background:#fff8d5"></i><b class="t" style="left:798px;top:258px">99.2</b><i style="left:859px;top:256px;width:1px;height:16px;background:#c0c0c0"></i><i style="left:860px;top:256px;width:63px;height:15px;background:#fff8d5"></i><b class="t" style="left:862px;top:258px">1540.0</b><i style="left:923px;top:256px;width:1px;height:16px;background:#c0c0c0"></i><i style="left:924px;top:256px;width:63px;height:15px;background:#fff8d5"></i><b class="t" style="left:926px;top:258px">1360.0</b><i style="left:987px;top:256px;width:1px;height:16px;background:#c0c0c0"></i><i style="left:28px;top:271px;width:960px;height:1px;background:#c0c0c0"></i><i style="left:1px;top:272px;width:26px;height:15px;background:#f0f0f0"></i><i style="left:1px;top:272px;width:26px;height:1px;background:#fff"></i><i style="left:1px;top:272px;width:1px;height:15px;background:#fff"></i><i style="left:1px;top:286px;width:26px;height:1px;background:#a0a0a0"></i><i style="left:26px;top:272px;width:1px;height:15px;background:#a0a0a0"></i><i style="left:1px;top:287px;width:26px;height:1px;background:#000"></i><i style="left:27px;top:272px;width:1px;height:16px;background:#000"></i><b class="t" style="left:0px;top:272px;width:25px;text-align:right">10</b><i style="left:28px;top:272px;width:63px;height:15px;background:#ffd8a0"></i><b class="t" style="left:28px;top:272px">11.73</b><i style="left:91px;top:272px;width:1px;height:16px;background:#c0c0c0"></i><i style="left:92px;top:272px;width:63px;height:15px;background:#fff8d5"></i><b class="t" style="left:94px;top:274px">3040</b><i style="left:155px;top:272px;width:1px;height:16px;background:#c0c0c0"></i><i style="left:156px;top:272px;width:63px;height:15px;background:#fff8d5"></i><b class="t" style="left:158px;top:274px">56.56</b><i style="left:219px;top:272px;width:1px;height:16px;background:#c0c0c0"></i><i style="left:220px;top:272px;width:63px;height:15px;background:#fff8d5"></i><b class="t" style="left:222px;top:274px">100.0</b><i style="left:283px;top:272px;width:1px;height:16px;background:#c0c0c0"></i><i style="left:284px;top:272px;width:63px;height:15px;background:#fff8d5"></i><b class="t" style="left:286px;top:274px">15.8</b><i style="left:347px;top:272px;width:1px;height:16px;background:#c0c0c0"></i><i style="left:348px;top:272px;width:63px;height:15px;background:#ffd8a0"></i><b class="t" style="left:348px;top:272px">12.13</b><i style="left:411px;top:272px;width:1px;height:16px;background:#c0c0c0"></i><i style="left:412px;top:272px;width:63px;height:15px;background:#fff8d5"></i><b class="t" style="left:414px;top:274px">119.5</b><i style="left:475px;top:272px;width:1px;height:16px;background:#c0c0c0"></i><i style="left:476px;top:272px;width:63px;height:15px;background:#fff8d5"></i><b class="t" style="left:478px;top:274px">117.9</b><i style="left:539px;top:272px;width:1px;height:16px;background:#c0c0c0"></i><i style="left:540px;top:272px;width:63px;height:15px;background:#fff8d5"></i><b class="t" style="left:542px;top:274px">103.0</b><i style="left:603px;top:272px;width:1px;height:16px;background:#c0c0c0"></i><i style="left:604px;top:272px;width:63px;height:15px;background:#fff8d5"></i><b class="t" style="left:606px;top:274px">72.5</b><i style="left:667px;top:272px;width:1px;height:16px;background:#c0c0c0"></i><i style="left:668px;top:272px;width:63px;height:15px;background:#ffd8a0"></i><b class="t" style="left:668px;top:272px">11.33</b><i style="left:731px;top:272px;width:1px;height:16px;background:#c0c0c0"></i><i style="left:732px;top:272px;width:63px;height:15px;background:#fff8d5"></i><b class="t" style="left:734px;top:274px">2960</b><i style="left:795px;top:272px;width:1px;height:16px;background:#c0c0c0"></i><i style="left:796px;top:272px;width:63px;height:15px;background:#fff8d5"></i><b class="t" style="left:798px;top:274px">100.0</b><i style="left:859px;top:272px;width:1px;height:16px;background:#c0c0c0"></i><i style="left:860px;top:272px;width:63px;height:15px;background:#fff8d5"></i><b class="t" style="left:862px;top:274px">1560.0</b><i style="left:923px;top:272px;width:1px;height:16px;background:#c0c0c0"></i><i style="left:924px;top:272px;width:63px;height:15px;background:#fff8d5"></i><b class="t" style="left:926px;top:274px">1370.0</b><i style="left:987px;top:272px;width:1px;height:16px;background:#c0c0c0"></i><i style="left:28px;top:287px;width:960px;height:1px;background:#c0c0c0"></i><i style="left:1px;top:288px;width:26px;height:15px;background:#f0f0f0"></i><i style="left:1px;top:288px;width:26px;height:1px;background:#fff"></i><i style="left:1px;top:288px;width:1px;height:15px;background:#fff"></i><i style="left:1px;top:302px;width:26px;height:1px;background:#a0a0a0"></i><i style="left:26px;top:288px;width:1px;height:15px;background:#a0a0a0"></i><i style="left:1px;top:303px;width:26px;height:1px;background:#000"></i><i style="left:27px;top:288px;width:1px;height:16px;background:#000"></i><b class="t" style="left:0px;top:288px;width:25px;text-align:right">11</b><i style="left:28px;top:288px;width:63px;height:15px;background:#ffd8a0"></i><b class="t" style="left:28px;top:288px">12.93</b><i style="left:91px;top:288px;width:1px;height:16px;background:#c0c0c0"></i><i style="left:92px;top:288px;width:63px;height:15px;background:#fff8d5"></i><b class="t" style="left:94px;top:290px">3360</b><i style="left:155px;top:288px;width:1px;height:16px;background:#c0c0c0"></i><i style="left:156px;top:288px;width:63px;height:15px;background:#fff8d5"></i><b class="t" style="left:158px;top:290px">63.03</b><i style="left:219px;top:288px;width:1px;height:16px;background:#c0c0c0"></i><i style="left:220px;top:288px;width:63px;height:15px;background:#fff8d5"></i><b class="t" style="left:222px;top:290px">100.0</b><i style="left:283px;top:288px;width:1px;height:16px;background:#c0c0c0"></i><i style="left:284px;top:288px;width:63px;height:15px;background:#fff8d5"></i><b class="t" style="left:286px;top:290px">16.5</b><i style="left:347px;top:288px;width:1px;height:16px;background:#c0c0c0"></i><i style="left:348px;top:288px;width:63px;height:15px;background:#ffd8a0"></i><b class="t" style="left:348px;top:288px">13.33</b><i style="left:411px;top:288px;width:1px;height:16px;background:#c0c0c0"></i><i style="left:412px;top:288px;width:63px;height:15px;background:#fff8d5"></i><b class="t" style="left:414px;top:290px">119.5</b><i style="left:475px;top:288px;width:1px;height:16px;background:#c0c0c0"></i><i style="left:476px;top:288px;width:63px;height:15px;background:#fff8d5"></i><b class="t" style="left:478px;top:290px">117.9</b><i style="left:539px;top:288px;width:1px;height:16px;background:#c0c0c0"></i><i style="left:540px;top:288px;width:63px;height:15px;background:#fff8d5"></i><b class="t" style="left:542px;top:290px">106.0</b><i style="left:603px;top:288px;width:1px;height:16px;background:#c0c0c0"></i><i style="left:604px;top:288px;width:63px;height:15px;background:#fff8d5"></i><b class="t" style="left:606px;top:290px">69.4</b><i style="left:667px;top:288px;width:1px;height:16px;background:#c0c0c0"></i><i style="left:668px;top:288px;width:63px;height:15px;background:#ffd8a0"></i><b class="t" style="left:668px;top:288px">12.53</b><i style="left:731px;top:288px;width:1px;height:16px;background:#c0c0c0"></i><i style="left:732px;top:288px;width:63px;height:15px;background:#fff8d5"></i><b class="t" style="left:734px;top:290px">3280</b><i style="left:795px;top:288px;width:1px;height:16px;background:#c0c0c0"></i><i style="left:796px;top:288px;width:63px;height:15px;background:#fff8d5"></i><b class="t" style="left:798px;top:290px">105.3</b><i style="left:859px;top:288px;width:1px;height:16px;background:#c0c0c0"></i><i style="left:860px;top:288px;width:63px;height:15px;background:#fff8d5"></i><b class="t" style="left:862px;top:290px">1550.0</b><i style="left:923px;top:288px;width:1px;height:16px;background:#c0c0c0"></i><i style="left:924px;top:288px;width:63px;height:15px;background:#fff8d5"></i><b class="t" style="left:926px;top:290px">1360.0</b><i style="left:987px;top:288px;width:1px;height:16px;background:#c0c0c0"></i><i style="left:28px;top:303px;width:960px;height:1px;background:#c0c0c0"></i><i style="left:1px;top:304px;width:26px;height:15px;background:#f0f0f0"></i><i style="left:1px;top:304px;width:26px;height:1px;background:#fff"></i><i style="left:1px;top:304px;width:1px;height:15px;background:#fff"></i><i style="left:1px;top:318px;width:26px;height:1px;background:#a0a0a0"></i><i style="left:26px;top:304px;width:1px;height:15px;background:#a0a0a0"></i><i style="left:1px;top:319px;width:26px;height:1px;background:#000"></i><i style="left:27px;top:304px;width:1px;height:16px;background:#000"></i><b class="t" style="left:0px;top:304px;width:25px;text-align:right">12</b><i style="left:28px;top:304px;width:63px;height:15px;background:#ffd8a0"></i><b class="t" style="left:28px;top:304px">14.15</b><i style="left:91px;top:304px;width:1px;height:16px;background:#c0c0c0"></i><i style="left:92px;top:304px;width:63px;height:15px;background:#fff8d5"></i><b class="t" style="left:94px;top:306px">3680</b><i style="left:155px;top:304px;width:1px;height:16px;background:#c0c0c0"></i><i style="left:156px;top:304px;width:63px;height:15px;background:#fff8d5"></i><b class="t" style="left:158px;top:306px">67.89</b><i style="left:219px;top:304px;width:1px;height:16px;background:#c0c0c0"></i><i style="left:220px;top:304px;width:63px;height:15px;background:#fff8d5"></i><b class="t" style="left:222px;top:306px">99.6</b><i style="left:283px;top:304px;width:1px;height:16px;background:#c0c0c0"></i><i style="left:284px;top:304px;width:63px;height:15px;background:#fff8d5"></i><b class="t" style="left:286px;top:306px">17.3</b><i style="left:347px;top:304px;width:1px;height:16px;background:#c0c0c0"></i><i style="left:348px;top:304px;width:63px;height:15px;background:#ffd8a0"></i><b class="t" style="left:348px;top:304px">14.64</b><i style="left:411px;top:304px;width:1px;height:16px;background:#c0c0c0"></i><i style="left:412px;top:304px;width:63px;height:15px;background:#fff8d5"></i><b class="t" style="left:414px;top:306px">118.0</b><i style="left:475px;top:304px;width:1px;height:16px;background:#c0c0c0"></i><i style="left:476px;top:304px;width:63px;height:15px;background:#fff8d5"></i><b class="t" style="left:478px;top:306px">116.4</b><i style="left:539px;top:304px;width:1px;height:16px;background:#c0c0c0"></i><i style="left:540px;top:304px;width:63px;height:15px;background:#fff8d5"></i><b class="t" style="left:542px;top:306px">102.3</b><i style="left:603px;top:304px;width:1px;height:16px;background:#c0c0c0"></i><i style="left:604px;top:304px;width:63px;height:15px;background:#fff8d5"></i><b class="t" style="left:606px;top:306px">69.4</b><i style="left:667px;top:304px;width:1px;height:16px;background:#c0c0c0"></i><i style="left:668px;top:304px;width:63px;height:15px;background:#ffd8a0"></i><b class="t" style="left:668px;top:304px">13.73</b><i style="left:731px;top:304px;width:1px;height:16px;background:#c0c0c0"></i><i style="left:732px;top:304px;width:63px;height:15px;background:#fff8d5"></i><b class="t" style="left:734px;top:306px">3560</b><i style="left:795px;top:304px;width:1px;height:16px;background:#c0c0c0"></i><i style="left:796px;top:304px;width:63px;height:15px;background:#fff8d5"></i><b class="t" style="left:798px;top:306px">105.3</b><i style="left:859px;top:304px;width:1px;height:16px;background:#c0c0c0"></i><i style="left:860px;top:304px;width:63px;height:15px;background:#fff8d5"></i><b class="t" style="left:862px;top:306px">1540.0</b><i style="left:923px;top:304px;width:1px;height:16px;background:#c0c0c0"></i><i style="left:924px;top:304px;width:63px;height:15px;background:#fff8d5"></i><b class="t" style="left:926px;top:306px">1350.0</b><i style="left:987px;top:304px;width:1px;height:16px;background:#c0c0c0"></i><i style="left:28px;top:319px;width:960px;height:1px;background:#c0c0c0"></i><i style="left:1px;top:320px;width:26px;height:15px;background:#f0f0f0"></i><i style="left:1px;top:320px;width:26px;height:1px;background:#fff"></i><i style="left:1px;top:320px;width:1px;height:15px;background:#fff"></i><i style="left:1px;top:334px;width:26px;height:1px;background:#a0a0a0"></i><i style="left:26px;top:320px;width:1px;height:15px;background:#a0a0a0"></i><i style="left:1px;top:335px;width:26px;height:1px;background:#000"></i><i style="left:27px;top:320px;width:1px;height:16px;background:#000"></i><b class="t" style="left:0px;top:320px;width:25px;text-align:right">13</b><i style="left:28px;top:320px;width:63px;height:15px;background:#ffd8a0"></i><b class="t" style="left:28px;top:320px">15.44</b><i style="left:91px;top:320px;width:1px;height:16px;background:#c0c0c0"></i><i style="left:92px;top:320px;width:63px;height:15px;background:#fff8d5"></i><b class="t" style="left:94px;top:322px">4000</b><i style="left:155px;top:320px;width:1px;height:16px;background:#c0c0c0"></i><i style="left:156px;top:320px;width:63px;height:15px;background:#fff8d5"></i><b class="t" style="left:158px;top:322px">74.33</b><i style="left:219px;top:320px;width:1px;height:16px;background:#c0c0c0"></i><i style="left:220px;top:320px;width:63px;height:15px;background:#fff8d5"></i><b class="t" style="left:222px;top:322px">100.0</b><i style="left:283px;top:320px;width:1px;height:16px;background:#c0c0c0"></i><i style="left:284px;top:320px;width:63px;height:15px;background:#fff8d5"></i><b class="t" style="left:286px;top:322px">18.8</b><i style="left:347px;top:320px;width:1px;height:16px;background:#c0c0c0"></i><i style="left:348px;top:320px;width:63px;height:15px;background:#ffd8a0"></i><b class="t" style="left:348px;top:320px">15.84</b><i style="left:411px;top:320px;width:1px;height:16px;background:#c0c0c0"></i><i style="left:412px;top:320px;width:63px;height:15px;background:#fff8d5"></i><b class="t" style="left:414px;top:322px">117.3</b><i style="left:475px;top:320px;width:1px;height:16px;background:#c0c0c0"></i><i style="left:476px;top:320px;width:63px;height:15px;background:#fff8d5"></i><b class="t" style="left:478px;top:322px">116.4</b><i style="left:539px;top:320px;width:1px;height:16px;background:#c0c0c0"></i><i style="left:540px;top:320px;width:63px;height:15px;background:#fff8d5"></i><b class="t" style="left:542px;top:322px">99.2</b><i style="left:603px;top:320px;width:1px;height:16px;background:#c0c0c0"></i><i style="left:604px;top:320px;width:63px;height:15px;background:#fff8d5"></i><b class="t" style="left:606px;top:322px">69.4</b><i style="left:667px;top:320px;width:1px;height:16px;background:#c0c0c0"></i><i style="left:668px;top:320px;width:63px;height:15px;background:#ffd8a0"></i><b class="t" style="left:668px;top:320px">15.04</b><i style="left:731px;top:320px;width:1px;height:16px;background:#c0c0c0"></i><i style="left:732px;top:320px;width:63px;height:15px;background:#fff8d5"></i><b class="t" style="left:734px;top:322px">3880</b><i style="left:795px;top:320px;width:1px;height:16px;background:#c0c0c0"></i><i style="left:796px;top:320px;width:63px;height:15px;background:#fff8d5"></i><b class="t" style="left:798px;top:322px">100.8</b><i style="left:859px;top:320px;width:1px;height:16px;background:#c0c0c0"></i><i style="left:860px;top:320px;width:63px;height:15px;background:#fff8d5"></i><b class="t" style="left:862px;top:322px">1540.0</b><i style="left:923px;top:320px;width:1px;height:16px;background:#c0c0c0"></i><i style="left:924px;top:320px;width:63px;height:15px;background:#fff8d5"></i><b class="t" style="left:926px;top:322px">1340.0</b><i style="left:987px;top:320px;width:1px;height:16px;background:#c0c0c0"></i><i style="left:28px;top:335px;width:960px;height:1px;background:#c0c0c0"></i><i style="left:1px;top:336px;width:26px;height:15px;background:#f0f0f0"></i><i style="left:1px;top:336px;width:26px;height:1px;background:#fff"></i><i style="left:1px;top:336px;width:1px;height:15px;background:#fff"></i><i style="left:1px;top:350px;width:26px;height:1px;background:#a0a0a0"></i><i style="left:26px;top:336px;width:1px;height:15px;background:#a0a0a0"></i><i style="left:1px;top:351px;width:26px;height:1px;background:#000"></i><i style="left:27px;top:336px;width:1px;height:16px;background:#000"></i><b class="t" style="left:0px;top:336px;width:25px;text-align:right">14</b><i style="left:28px;top:336px;width:63px;height:15px;background:#ffd8a0"></i><b class="t" style="left:28px;top:336px">16.75</b><i style="left:91px;top:336px;width:1px;height:16px;background:#c0c0c0"></i><i style="left:92px;top:336px;width:63px;height:15px;background:#fff8d5"></i><b class="t" style="left:94px;top:338px">4120</b><i style="left:155px;top:336px;width:1px;height:16px;background:#c0c0c0"></i><i style="left:156px;top:336px;width:63px;height:15px;background:#fff8d5"></i><b class="t" style="left:158px;top:338px">76.44</b><i style="left:219px;top:336px;width:1px;height:16px;background:#c0c0c0"></i><i style="left:220px;top:336px;width:63px;height:15px;background:#fff8d5"></i><b class="t" style="left:222px;top:338px">100.0</b><i style="left:283px;top:336px;width:1px;height:16px;background:#c0c0c0"></i><i style="left:284px;top:336px;width:63px;height:15px;background:#fff8d5"></i><b class="t" style="left:286px;top:338px">18.8</b><i style="left:347px;top:336px;width:1px;height:16px;background:#c0c0c0"></i><i style="left:348px;top:336px;width:63px;height:15px;background:#ffd8a0"></i><b class="t" style="left:348px;top:336px">17.15</b><i style="left:411px;top:336px;width:1px;height:16px;background:#c0c0c0"></i><i style="left:412px;top:336px;width:63px;height:15px;background:#fff8d5"></i><b class="t" style="left:414px;top:338px">118.8</b><i style="left:475px;top:336px;width:1px;height:16px;background:#c0c0c0"></i><i style="left:476px;top:336px;width:63px;height:15px;background:#fff8d5"></i><b class="t" style="left:478px;top:338px">117.9</b><i style="left:539px;top:336px;width:1px;height:16px;background:#c0c0c0"></i><i style="left:540px;top:336px;width:63px;height:15px;background:#fff8d5"></i><b class="t" style="left:542px;top:338px">99.2</b><i style="left:603px;top:336px;width:1px;height:16px;background:#c0c0c0"></i><i style="left:604px;top:336px;width:63px;height:15px;background:#fff8d5"></i><b class="t" style="left:606px;top:338px">70.6</b><i style="left:667px;top:336px;width:1px;height:16px;background:#c0c0c0"></i><i style="left:668px;top:336px;width:63px;height:15px;background:#ffd8a0"></i><b class="t" style="left:668px;top:336px">16.26</b><i style="left:731px;top:336px;width:1px;height:16px;background:#c0c0c0"></i><i style="left:732px;top:336px;width:63px;height:15px;background:#fff8d5"></i><b class="t" style="left:734px;top:338px">4200</b><i style="left:795px;top:336px;width:1px;height:16px;background:#c0c0c0"></i><i style="left:796px;top:336px;width:63px;height:15px;background:#fff8d5"></i><b class="t" style="left:798px;top:338px">99.2</b><i style="left:859px;top:336px;width:1px;height:16px;background:#c0c0c0"></i><i style="left:860px;top:336px;width:63px;height:15px;background:#fff8d5"></i><b class="t" style="left:862px;top:338px">1550.0</b><i style="left:923px;top:336px;width:1px;height:16px;background:#c0c0c0"></i><i style="left:924px;top:336px;width:63px;height:15px;background:#fff8d5"></i><b class="t" style="left:926px;top:338px">1330.0</b><i style="left:987px;top:336px;width:1px;height:16px;background:#c0c0c0"></i><i style="left:28px;top:351px;width:960px;height:1px;background:#c0c0c0"></i><i style="left:1px;top:352px;width:26px;height:15px;background:#f0f0f0"></i><i style="left:1px;top:352px;width:26px;height:1px;background:#fff"></i><i style="left:1px;top:352px;width:1px;height:15px;background:#fff"></i><i style="left:1px;top:366px;width:26px;height:1px;background:#a0a0a0"></i><i style="left:26px;top:352px;width:1px;height:15px;background:#a0a0a0"></i><i style="left:1px;top:367px;width:26px;height:1px;background:#000"></i><i style="left:27px;top:352px;width:1px;height:16px;background:#000"></i><b class="t" style="left:0px;top:352px;width:25px;text-align:right">15</b><i style="left:28px;top:352px;width:63px;height:15px;background:#ffd8a0"></i><b class="t" style="left:28px;top:352px">17.97</b><i style="left:91px;top:352px;width:1px;height:16px;background:#c0c0c0"></i><i style="left:92px;top:352px;width:63px;height:15px;background:#fff8d5"></i><b class="t" style="left:94px;top:354px">4400</b><i style="left:155px;top:352px;width:1px;height:16px;background:#c0c0c0"></i><i style="left:156px;top:352px;width:63px;height:15px;background:#fff8d5"></i><b class="t" style="left:158px;top:354px">81.94</b><i style="left:219px;top:352px;width:1px;height:16px;background:#c0c0c0"></i><i style="left:220px;top:352px;width:63px;height:15px;background:#fff8d5"></i><b class="t" style="left:222px;top:354px">100.0</b><i style="left:283px;top:352px;width:1px;height:16px;background:#c0c0c0"></i><i style="left:284px;top:352px;width:63px;height:15px;background:#fff8d5"></i><b class="t" style="left:286px;top:354px">20.3</b><i style="left:347px;top:352px;width:1px;height:16px;background:#c0c0c0"></i><i style="left:348px;top:352px;width:63px;height:15px;background:#ffd8a0"></i><b class="t" style="left:348px;top:352px">18.47</b><i style="left:411px;top:352px;width:1px;height:16px;background:#c0c0c0"></i><i style="left:412px;top:352px;width:63px;height:15px;background:#fff8d5"></i><b class="t" style="left:414px;top:354px">120.3</b><i style="left:475px;top:352px;width:1px;height:16px;background:#c0c0c0"></i><i style="left:476px;top:352px;width:63px;height:15px;background:#fff8d5"></i><b class="t" style="left:478px;top:354px">119.4</b><i style="left:539px;top:352px;width:1px;height:16px;background:#c0c0c0"></i><i style="left:540px;top:352px;width:63px;height:15px;background:#fff8d5"></i><b class="t" style="left:542px;top:354px">100.0</b><i style="left:603px;top:352px;width:1px;height:16px;background:#c0c0c0"></i><i style="left:604px;top:352px;width:63px;height:15px;background:#fff8d5"></i><b class="t" style="left:606px;top:354px">72.5</b><i style="left:667px;top:352px;width:1px;height:16px;background:#c0c0c0"></i><i style="left:668px;top:352px;width:63px;height:15px;background:#ffd8a0"></i><b class="t" style="left:668px;top:352px">17.55</b><i style="left:731px;top:352px;width:1px;height:16px;background:#c0c0c0"></i><i style="left:732px;top:352px;width:63px;height:15px;background:#fff8d5"></i><b class="t" style="left:734px;top:354px">4320</b><i style="left:795px;top:352px;width:1px;height:16px;background:#c0c0c0"></i><i style="left:796px;top:352px;width:63px;height:15px;background:#fff8d5"></i><b class="t" style="left:798px;top:354px">99.2</b><i style="left:859px;top:352px;width:1px;height:16px;background:#c0c0c0"></i><i style="left:860px;top:352px;width:63px;height:15px;background:#fff8d5"></i><b class="t" style="left:862px;top:354px">1550.0</b><i style="left:923px;top:352px;width:1px;height:16px;background:#c0c0c0"></i><i style="left:924px;top:352px;width:63px;height:15px;background:#fff8d5"></i><b class="t" style="left:926px;top:354px">1320.0</b><i style="left:987px;top:352px;width:1px;height:16px;background:#c0c0c0"></i><i style="left:28px;top:367px;width:960px;height:1px;background:#c0c0c0"></i><i style="left:1px;top:368px;width:26px;height:15px;background:#f0f0f0"></i><i style="left:1px;top:368px;width:26px;height:1px;background:#fff"></i><i style="left:1px;top:368px;width:1px;height:15px;background:#fff"></i><i style="left:1px;top:382px;width:26px;height:1px;background:#a0a0a0"></i><i style="left:26px;top:368px;width:1px;height:15px;background:#a0a0a0"></i><i style="left:1px;top:383px;width:26px;height:1px;background:#000"></i><i style="left:27px;top:368px;width:1px;height:16px;background:#000"></i><b class="t" style="left:0px;top:368px;width:25px;text-align:right">16</b><i style="left:28px;top:368px;width:63px;height:15px;background:#ffd8a0"></i><b class="t" style="left:28px;top:368px">19.27</b><i style="left:91px;top:368px;width:1px;height:16px;background:#c0c0c0"></i><i style="left:92px;top:368px;width:63px;height:15px;background:#fff8d5"></i><b class="t" style="left:94px;top:370px">4720</b><i style="left:155px;top:368px;width:1px;height:16px;background:#c0c0c0"></i><i style="left:156px;top:368px;width:63px;height:15px;background:#fff8d5"></i><b class="t" style="left:158px;top:370px">87.28</b><i style="left:219px;top:368px;width:1px;height:16px;background:#c0c0c0"></i><i style="left:220px;top:368px;width:63px;height:15px;background:#fff8d5"></i><b class="t" style="left:222px;top:370px">100.0</b><i style="left:283px;top:368px;width:1px;height:16px;background:#c0c0c0"></i><i style="left:284px;top:368px;width:63px;height:15px;background:#fff8d5"></i><b class="t" style="left:286px;top:370px">20.3</b><i style="left:347px;top:368px;width:1px;height:16px;background:#c0c0c0"></i><i style="left:348px;top:368px;width:63px;height:15px;background:#ffd8a0"></i><b class="t" style="left:348px;top:368px">19.67</b><i style="left:411px;top:368px;width:1px;height:16px;background:#c0c0c0"></i><i style="left:412px;top:368px;width:63px;height:15px;background:#fff8d5"></i><b class="t" style="left:414px;top:370px">118.8</b><i style="left:475px;top:368px;width:1px;height:16px;background:#c0c0c0"></i><i style="left:476px;top:368px;width:63px;height:15px;background:#fff8d5"></i><b class="t" style="left:478px;top:370px">117.9</b><i style="left:539px;top:368px;width:1px;height:16px;background:#c0c0c0"></i><i style="left:540px;top:368px;width:63px;height:15px;background:#fff8d5"></i><b class="t" style="left:542px;top:370px">101.5</b><i style="left:603px;top:368px;width:1px;height:16px;background:#c0c0c0"></i><i style="left:604px;top:368px;width:63px;height:15px;background:#fff8d5"></i><b class="t" style="left:606px;top:370px">71.4</b><i style="left:667px;top:368px;width:1px;height:16px;background:#c0c0c0"></i><i style="left:668px;top:368px;width:63px;height:15px;background:#ffd8a0"></i><b class="t" style="left:668px;top:368px">18.87</b><i style="left:731px;top:368px;width:1px;height:16px;background:#c0c0c0"></i><i style="left:732px;top:368px;width:63px;height:15px;background:#fff8d5"></i><b class="t" style="left:734px;top:370px">4640</b><i style="left:795px;top:368px;width:1px;height:16px;background:#c0c0c0"></i><i style="left:796px;top:368px;width:63px;height:15px;background:#fff8d5"></i><b class="t" style="left:798px;top:370px">100.8</b><i style="left:859px;top:368px;width:1px;height:16px;background:#c0c0c0"></i><i style="left:860px;top:368px;width:63px;height:15px;background:#fff8d5"></i><b class="t" style="left:862px;top:370px">1540.0</b><i style="left:923px;top:368px;width:1px;height:16px;background:#c0c0c0"></i><i style="left:924px;top:368px;width:63px;height:15px;background:#fff8d5"></i><b class="t" style="left:926px;top:370px">1310.0</b><i style="left:987px;top:368px;width:1px;height:16px;background:#c0c0c0"></i><i style="left:28px;top:383px;width:960px;height:1px;background:#c0c0c0"></i><i style="left:1px;top:384px;width:26px;height:15px;background:#f0f0f0"></i><i style="left:1px;top:384px;width:26px;height:1px;background:#fff"></i><i style="left:1px;top:384px;width:1px;height:15px;background:#fff"></i><i style="left:1px;top:398px;width:26px;height:1px;background:#a0a0a0"></i><i style="left:26px;top:384px;width:1px;height:15px;background:#a0a0a0"></i><i style="left:1px;top:399px;width:26px;height:1px;background:#000"></i><i style="left:27px;top:384px;width:1px;height:16px;background:#000"></i><b class="t" style="left:0px;top:384px;width:25px;text-align:right">17</b><i style="left:28px;top:384px;width:63px;height:15px;background:#ffd8a0"></i><b class="t" style="left:28px;top:384px">20.58</b><i style="left:91px;top:384px;width:1px;height:16px;background:#c0c0c0"></i><i style="left:92px;top:384px;width:63px;height:15px;background:#fff8d5"></i><b class="t" style="left:94px;top:386px">5040</b><i style="left:155px;top:384px;width:1px;height:16px;background:#c0c0c0"></i><i style="left:156px;top:384px;width:63px;height:15px;background:#fff8d5"></i><b class="t" style="left:158px;top:386px">93.67</b><i style="left:219px;top:384px;width:1px;height:16px;background:#c0c0c0"></i><i style="left:220px;top:384px;width:63px;height:15px;background:#fff8d5"></i><b class="t" style="left:222px;top:386px">100.0</b><i style="left:283px;top:384px;width:1px;height:16px;background:#c0c0c0"></i><i style="left:284px;top:384px;width:63px;height:15px;background:#fff8d5"></i><b class="t" style="left:286px;top:386px">21.0</b><i style="left:347px;top:384px;width:1px;height:16px;background:#c0c0c0"></i><i style="left:348px;top:384px;width:63px;height:15px;background:#ffd8a0"></i><b class="t" style="left:348px;top:384px">20.98</b><i style="left:411px;top:384px;width:1px;height:16px;background:#c0c0c0"></i><i style="left:412px;top:384px;width:63px;height:15px;background:#fff8d5"></i><b class="t" style="left:414px;top:386px">117.3</b><i style="left:475px;top:384px;width:1px;height:16px;background:#c0c0c0"></i><i style="left:476px;top:384px;width:63px;height:15px;background:#fff8d5"></i><b class="t" style="left:478px;top:386px">116.4</b><i style="left:539px;top:384px;width:1px;height:16px;background:#c0c0c0"></i><i style="left:540px;top:384px;width:63px;height:15px;background:#fff8d5"></i><b class="t" style="left:542px;top:386px">97.0</b><i style="left:603px;top:384px;width:1px;height:16px;background:#c0c0c0"></i><i style="left:604px;top:384px;width:63px;height:15px;background:#fff8d5"></i><b class="t" style="left:606px;top:386px">48.6</b><i style="left:667px;top:384px;width:1px;height:16px;background:#c0c0c0"></i><i style="left:668px;top:384px;width:63px;height:15px;background:#ffd8a0"></i><b class="t" style="left:668px;top:384px">20.08</b><i style="left:731px;top:384px;width:1px;height:16px;background:#c0c0c0"></i><i style="left:732px;top:384px;width:63px;height:15px;background:#fff8d5"></i><b class="t" style="left:734px;top:386px">4920</b><i style="left:795px;top:384px;width:1px;height:16px;background:#c0c0c0"></i><i style="left:796px;top:384px;width:63px;height:15px;background:#fff8d5"></i><b class="t" style="left:798px;top:386px">101.5</b><i style="left:859px;top:384px;width:1px;height:16px;background:#c0c0c0"></i><i style="left:860px;top:384px;width:63px;height:15px;background:#fff8d5"></i><b class="t" style="left:862px;top:386px">1500.0</b><i style="left:923px;top:384px;width:1px;height:16px;background:#c0c0c0"></i><i style="left:924px;top:384px;width:63px;height:15px;background:#fff8d5"></i><b class="t" style="left:926px;top:386px">1290.0</b><i style="left:987px;top:384px;width:1px;height:16px;background:#c0c0c0"></i><i style="left:28px;top:399px;width:960px;height:1px;background:#c0c0c0"></i><i style="left:1px;top:400px;width:26px;height:15px;background:#f0f0f0"></i><i style="left:1px;top:400px;width:26px;height:1px;background:#fff"></i><i style="left:1px;top:400px;width:1px;height:15px;background:#fff"></i><i style="left:1px;top:414px;width:26px;height:1px;background:#a0a0a0"></i><i style="left:26px;top:400px;width:1px;height:15px;background:#a0a0a0"></i><i style="left:1px;top:415px;width:26px;height:1px;background:#000"></i><i style="left:27px;top:400px;width:1px;height:16px;background:#000"></i><b class="t" style="left:0px;top:400px;width:25px;text-align:right">18</b><i style="left:28px;top:400px;width:63px;height:15px;background:#ffd8a0"></i><b class="t" style="left:28px;top:400px">21.78</b><i style="left:91px;top:400px;width:1px;height:16px;background:#c0c0c0"></i><i style="left:92px;top:400px;width:63px;height:15px;background:#fff8d5"></i><b class="t" style="left:94px;top:402px">5040</b><i style="left:155px;top:400px;width:1px;height:16px;background:#c0c0c0"></i><i style="left:156px;top:400px;width:63px;height:15px;background:#fff8d5"></i><b class="t" style="left:158px;top:402px">18.03</b><i style="left:219px;top:400px;width:1px;height:16px;background:#c0c0c0"></i><i style="left:220px;top:400px;width:63px;height:15px;background:#fff8d5"></i><b class="t" style="left:222px;top:402px">7.8</b><i style="left:283px;top:400px;width:1px;height:16px;background:#c0c0c0"></i><i style="left:284px;top:400px;width:63px;height:15px;background:#fff8d5"></i><b class="t" style="left:286px;top:402px">11.3</b><i style="left:347px;top:400px;width:1px;height:16px;background:#c0c0c0"></i><i style="left:348px;top:400px;width:63px;height:15px;background:#ffd8a0"></i><b class="t" style="left:348px;top:400px">22.20</b><i style="left:411px;top:400px;width:1px;height:16px;background:#c0c0c0"></i><i style="left:412px;top:400px;width:63px;height:15px;background:#fff8d5"></i><b class="t" style="left:414px;top:402px">118.8</b><i style="left:475px;top:400px;width:1px;height:16px;background:#c0c0c0"></i><i style="left:476px;top:400px;width:63px;height:15px;background:#fff8d5"></i><b class="t" style="left:478px;top:402px">117.9</b><i style="left:539px;top:400px;width:1px;height:16px;background:#c0c0c0"></i><i style="left:540px;top:400px;width:63px;height:15px;background:#fff8d5"></i><b class="t" style="left:542px;top:402px">13.5</b><i style="left:603px;top:400px;width:1px;height:16px;background:#c0c0c0"></i><i style="left:604px;top:400px;width:63px;height:15px;background:#fff8d5"></i><b class="t" style="left:606px;top:402px">0.0</b><i style="left:667px;top:400px;width:1px;height:16px;background:#c0c0c0"></i><i style="left:668px;top:400px;width:63px;height:15px;background:#ffd8a0"></i><b class="t" style="left:668px;top:400px">21.38</b><i style="left:731px;top:400px;width:1px;height:16px;background:#c0c0c0"></i><i style="left:732px;top:400px;width:63px;height:15px;background:#fff8d5"></i><b class="t" style="left:734px;top:402px">5040</b><i style="left:795px;top:400px;width:1px;height:16px;background:#c0c0c0"></i><i style="left:796px;top:400px;width:63px;height:15px;background:#fff8d5"></i><b class="t" style="left:798px;top:402px">17.3</b><i style="left:859px;top:400px;width:1px;height:16px;background:#c0c0c0"></i><i style="left:860px;top:400px;width:63px;height:15px;background:#fff8d5"></i><b class="t" style="left:862px;top:402px">1010.0</b><i style="left:923px;top:400px;width:1px;height:16px;background:#c0c0c0"></i><i style="left:924px;top:400px;width:63px;height:15px;background:#fff8d5"></i><b class="t" style="left:926px;top:402px">1350.0</b><i style="left:987px;top:400px;width:1px;height:16px;background:#c0c0c0"></i><i style="left:28px;top:415px;width:960px;height:1px;background:#c0c0c0"></i><i style="left:1px;top:416px;width:26px;height:15px;background:#f0f0f0"></i><i style="left:1px;top:416px;width:26px;height:1px;background:#fff"></i><i style="left:1px;top:416px;width:1px;height:15px;background:#fff"></i><i style="left:1px;top:430px;width:26px;height:1px;background:#a0a0a0"></i><i style="left:26px;top:416px;width:1px;height:15px;background:#a0a0a0"></i><i style="left:1px;top:431px;width:26px;height:1px;background:#000"></i><i style="left:27px;top:416px;width:1px;height:16px;background:#000"></i><b class="t" style="left:0px;top:416px;width:25px;text-align:right">19</b><i style="left:28px;top:416px;width:63px;height:15px;background:#ffd8a0"></i><b class="t" style="left:28px;top:416px">23.09</b><i style="left:91px;top:416px;width:1px;height:16px;background:#c0c0c0"></i><i style="left:92px;top:416px;width:63px;height:15px;background:#fff8d5"></i><b class="t" style="left:94px;top:418px">4800</b><i style="left:155px;top:416px;width:1px;height:16px;background:#c0c0c0"></i><i style="left:156px;top:416px;width:63px;height:15px;background:#fff8d5"></i><b class="t" style="left:158px;top:418px">14.08</b><i style="left:219px;top:416px;width:1px;height:16px;background:#c0c0c0"></i><i style="left:220px;top:416px;width:63px;height:15px;background:#fff8d5"></i><b class="t" style="left:222px;top:418px">8.6</b><i style="left:283px;top:416px;width:1px;height:16px;background:#c0c0c0"></i><i style="left:284px;top:416px;width:63px;height:15px;background:#fff8d5"></i><b class="t" style="left:286px;top:418px">9.0</b><i style="left:347px;top:416px;width:1px;height:16px;background:#c0c0c0"></i><i style="left:348px;top:416px;width:63px;height:15px;background:#ffd8a0"></i><b class="t" style="left:348px;top:416px">23.49</b><i style="left:411px;top:416px;width:1px;height:16px;background:#c0c0c0"></i><i style="left:412px;top:416px;width:63px;height:15px;background:#fff8d5"></i><b class="t" style="left:414px;top:418px">119.5</b><i style="left:475px;top:416px;width:1px;height:16px;background:#c0c0c0"></i><i style="left:476px;top:416px;width:63px;height:15px;background:#fff8d5"></i><b class="t" style="left:478px;top:418px">117.9</b><i style="left:539px;top:416px;width:1px;height:16px;background:#c0c0c0"></i><i style="left:540px;top:416px;width:63px;height:15px;background:#fff8d5"></i><b class="t" style="left:542px;top:418px">14.3</b><i style="left:603px;top:416px;width:1px;height:16px;background:#c0c0c0"></i><i style="left:604px;top:416px;width:63px;height:15px;background:#fff8d5"></i><b class="t" style="left:606px;top:418px">0.0</b><i style="left:667px;top:416px;width:1px;height:16px;background:#c0c0c0"></i><i style="left:668px;top:416px;width:63px;height:15px;background:#ffd8a0"></i><b class="t" style="left:668px;top:416px">22.59</b><i style="left:731px;top:416px;width:1px;height:16px;background:#c0c0c0"></i><i style="left:732px;top:416px;width:63px;height:15px;background:#fff8d5"></i><b class="t" style="left:734px;top:418px">4920</b><i style="left:795px;top:416px;width:1px;height:16px;background:#c0c0c0"></i><i style="left:796px;top:416px;width:63px;height:15px;background:#fff8d5"></i><b class="t" style="left:798px;top:418px">13.5</b><i style="left:859px;top:416px;width:1px;height:16px;background:#c0c0c0"></i><i style="left:860px;top:416px;width:63px;height:15px;background:#fff8d5"></i><b class="t" style="left:862px;top:418px">1010.0</b><i style="left:923px;top:416px;width:1px;height:16px;background:#c0c0c0"></i><i style="left:924px;top:416px;width:63px;height:15px;background:#fff8d5"></i><b class="t" style="left:926px;top:418px">1110.0</b><i style="left:987px;top:416px;width:1px;height:16px;background:#c0c0c0"></i><i style="left:28px;top:431px;width:960px;height:1px;background:#c0c0c0"></i><i style="left:1px;top:432px;width:26px;height:15px;background:#f0f0f0"></i><i style="left:1px;top:432px;width:26px;height:1px;background:#fff"></i><i style="left:1px;top:432px;width:1px;height:15px;background:#fff"></i><i style="left:1px;top:446px;width:26px;height:1px;background:#a0a0a0"></i><i style="left:26px;top:432px;width:1px;height:15px;background:#a0a0a0"></i><i style="left:1px;top:447px;width:26px;height:1px;background:#000"></i><i style="left:27px;top:432px;width:1px;height:16px;background:#000"></i><b class="t" style="left:0px;top:432px;width:25px;text-align:right">20</b><i style="left:28px;top:432px;width:63px;height:15px;background:#ffd8a0"></i><b class="t" style="left:28px;top:432px">24.31</b><i style="left:91px;top:432px;width:1px;height:16px;background:#c0c0c0"></i><i style="left:92px;top:432px;width:63px;height:15px;background:#fff8d5"></i><b class="t" style="left:94px;top:434px">4640</b><i style="left:155px;top:432px;width:1px;height:16px;background:#c0c0c0"></i><i style="left:156px;top:432px;width:63px;height:15px;background:#fff8d5"></i><b class="t" style="left:158px;top:434px">13.92</b><i style="left:219px;top:432px;width:1px;height:16px;background:#c0c0c0"></i><i style="left:220px;top:432px;width:63px;height:15px;background:#fff8d5"></i><b class="t" style="left:222px;top:434px">8.6</b><i style="left:283px;top:432px;width:1px;height:16px;background:#c0c0c0"></i><i style="left:284px;top:432px;width:63px;height:15px;background:#fff8d5"></i><b class="t" style="left:286px;top:434px">6.8</b><i style="left:347px;top:432px;width:1px;height:16px;background:#c0c0c0"></i><i style="left:348px;top:432px;width:63px;height:15px;background:#ffd8a0"></i><b class="t" style="left:348px;top:432px">24.80</b><i style="left:411px;top:432px;width:1px;height:16px;background:#c0c0c0"></i><i style="left:412px;top:432px;width:63px;height:15px;background:#fff8d5"></i><b class="t" style="left:414px;top:434px">120.3</b><i style="left:475px;top:432px;width:1px;height:16px;background:#c0c0c0"></i><i style="left:476px;top:432px;width:63px;height:15px;background:#fff8d5"></i><b class="t" style="left:478px;top:434px">119.4</b><i style="left:539px;top:432px;width:1px;height:16px;background:#c0c0c0"></i><i style="left:540px;top:432px;width:63px;height:15px;background:#fff8d5"></i><b class="t" style="left:542px;top:434px">14.3</b><i style="left:603px;top:432px;width:1px;height:16px;background:#c0c0c0"></i><i style="left:604px;top:432px;width:63px;height:15px;background:#fff8d5"></i><b class="t" style="left:606px;top:434px">0.0</b><i style="left:667px;top:432px;width:1px;height:16px;background:#c0c0c0"></i><i style="left:668px;top:432px;width:63px;height:15px;background:#ffd8a0"></i><b class="t" style="left:668px;top:432px">23.89</b><i style="left:731px;top:432px;width:1px;height:16px;background:#c0c0c0"></i><i style="left:732px;top:432px;width:63px;height:15px;background:#fff8d5"></i><b class="t" style="left:734px;top:434px">4680</b><i style="left:795px;top:432px;width:1px;height:16px;background:#c0c0c0"></i><i style="left:796px;top:432px;width:63px;height:15px;background:#fff8d5"></i><b class="t" style="left:798px;top:434px">14.3</b><i style="left:859px;top:432px;width:1px;height:16px;background:#c0c0c0"></i><i style="left:860px;top:432px;width:63px;height:15px;background:#fff8d5"></i><b class="t" style="left:862px;top:434px">1010.0</b><i style="left:923px;top:432px;width:1px;height:16px;background:#c0c0c0"></i><i style="left:924px;top:432px;width:63px;height:15px;background:#fff8d5"></i><b class="t" style="left:926px;top:434px">1090.0</b><i style="left:987px;top:432px;width:1px;height:16px;background:#c0c0c0"></i><i style="left:28px;top:447px;width:960px;height:1px;background:#c0c0c0"></i><i style="left:1px;top:448px;width:26px;height:15px;background:#f0f0f0"></i><i style="left:1px;top:448px;width:26px;height:1px;background:#fff"></i><i style="left:1px;top:448px;width:1px;height:15px;background:#fff"></i><i style="left:1px;top:462px;width:26px;height:1px;background:#a0a0a0"></i><i style="left:26px;top:448px;width:1px;height:15px;background:#a0a0a0"></i><i style="left:1px;top:463px;width:26px;height:1px;background:#000"></i><i style="left:27px;top:448px;width:1px;height:16px;background:#000"></i><b class="t" style="left:0px;top:448px;width:25px;text-align:right">21</b><i style="left:28px;top:448px;width:63px;height:15px;background:#ffd8a0"></i><b class="t" style="left:28px;top:448px">25.60</b><i style="left:91px;top:448px;width:1px;height:16px;background:#c0c0c0"></i><i style="left:92px;top:448px;width:63px;height:15px;background:#fff8d5"></i><b class="t" style="left:94px;top:450px">4400</b><i style="left:155px;top:448px;width:1px;height:16px;background:#c0c0c0"></i><i style="left:156px;top:448px;width:63px;height:15px;background:#fff8d5"></i><b class="t" style="left:158px;top:450px">13.56</b><i style="left:219px;top:448px;width:1px;height:16px;background:#c0c0c0"></i><i style="left:220px;top:448px;width:63px;height:15px;background:#fff8d5"></i><b class="t" style="left:222px;top:450px">8.2</b><i style="left:283px;top:448px;width:1px;height:16px;background:#c0c0c0"></i><i style="left:284px;top:448px;width:63px;height:15px;background:#fff8d5"></i><b class="t" style="left:286px;top:450px">5.3</b><i style="left:347px;top:448px;width:1px;height:16px;background:#c0c0c0"></i><i style="left:348px;top:448px;width:63px;height:15px;background:#ffd8a0"></i><b class="t" style="left:348px;top:448px">26.00</b><i style="left:411px;top:448px;width:1px;height:16px;background:#c0c0c0"></i><i style="left:412px;top:448px;width:63px;height:15px;background:#fff8d5"></i><b class="t" style="left:414px;top:450px">119.5</b><i style="left:475px;top:448px;width:1px;height:16px;background:#c0c0c0"></i><i style="left:476px;top:448px;width:63px;height:15px;background:#fff8d5"></i><b class="t" style="left:478px;top:450px">117.9</b><i style="left:539px;top:448px;width:1px;height:16px;background:#c0c0c0"></i><i style="left:540px;top:448px;width:63px;height:15px;background:#fff8d5"></i><b class="t" style="left:542px;top:450px">14.3</b><i style="left:603px;top:448px;width:1px;height:16px;background:#c0c0c0"></i><i style="left:604px;top:448px;width:63px;height:15px;background:#fff8d5"></i><b class="t" style="left:606px;top:450px">0.0</b><i style="left:667px;top:448px;width:1px;height:16px;background:#c0c0c0"></i><i style="left:668px;top:448px;width:63px;height:15px;background:#ffd8a0"></i><b class="t" style="left:668px;top:448px">25.20</b><i style="left:731px;top:448px;width:1px;height:16px;background:#c0c0c0"></i><i style="left:732px;top:448px;width:63px;height:15px;background:#fff8d5"></i><b class="t" style="left:734px;top:450px">4480</b><i style="left:795px;top:448px;width:1px;height:16px;background:#c0c0c0"></i><i style="left:796px;top:448px;width:63px;height:15px;background:#fff8d5"></i><b class="t" style="left:798px;top:450px">14.3</b><i style="left:859px;top:448px;width:1px;height:16px;background:#c0c0c0"></i><i style="left:860px;top:448px;width:63px;height:15px;background:#fff8d5"></i><b class="t" style="left:862px;top:450px">1010.0</b><i style="left:923px;top:448px;width:1px;height:16px;background:#c0c0c0"></i><i style="left:924px;top:448px;width:63px;height:15px;background:#fff8d5"></i><b class="t" style="left:926px;top:450px">1080.0</b><i style="left:987px;top:448px;width:1px;height:16px;background:#c0c0c0"></i><i style="left:28px;top:463px;width:960px;height:1px;background:#c0c0c0"></i><i style="left:1px;top:464px;width:26px;height:15px;background:#f0f0f0"></i><i style="left:1px;top:464px;width:26px;height:1px;background:#fff"></i><i style="left:1px;top:464px;width:1px;height:15px;background:#fff"></i><i style="left:1px;top:478px;width:26px;height:1px;background:#a0a0a0"></i><i style="left:26px;top:464px;width:1px;height:15px;background:#a0a0a0"></i><i style="left:1px;top:479px;width:26px;height:1px;background:#000"></i><i style="left:27px;top:464px;width:1px;height:16px;background:#000"></i><b class="t" style="left:0px;top:464px;width:25px;text-align:right">22</b><i style="left:28px;top:464px;width:63px;height:15px;background:#ffd8a0"></i><b class="t" style="left:28px;top:464px">26.91</b><i style="left:91px;top:464px;width:1px;height:16px;background:#c0c0c0"></i><i style="left:92px;top:464px;width:63px;height:15px;background:#fff8d5"></i><b class="t" style="left:94px;top:466px">4160</b><i style="left:155px;top:464px;width:1px;height:16px;background:#c0c0c0"></i><i style="left:156px;top:464px;width:63px;height:15px;background:#fff8d5"></i><b class="t" style="left:158px;top:466px">12.22</b><i style="left:219px;top:464px;width:1px;height:16px;background:#c0c0c0"></i><i style="left:220px;top:464px;width:63px;height:15px;background:#fff8d5"></i><b class="t" style="left:222px;top:466px">7.5</b><i style="left:283px;top:464px;width:1px;height:16px;background:#c0c0c0"></i><i style="left:284px;top:464px;width:63px;height:15px;background:#fff8d5"></i><b class="t" style="left:286px;top:466px">4.5</b><i style="left:347px;top:464px;width:1px;height:16px;background:#c0c0c0"></i><i style="left:348px;top:464px;width:63px;height:15px;background:#ffd8a0"></i><b class="t" style="left:348px;top:464px">27.30</b><i style="left:411px;top:464px;width:1px;height:16px;background:#c0c0c0"></i><i style="left:412px;top:464px;width:63px;height:15px;background:#fff8d5"></i><b class="t" style="left:414px;top:466px">117.3</b><i style="left:475px;top:464px;width:1px;height:16px;background:#c0c0c0"></i><i style="left:476px;top:464px;width:63px;height:15px;background:#fff8d5"></i><b class="t" style="left:478px;top:466px">116.4</b><i style="left:539px;top:464px;width:1px;height:16px;background:#c0c0c0"></i><i style="left:540px;top:464px;width:63px;height:15px;background:#fff8d5"></i><b class="t" style="left:542px;top:466px">15.0</b><i style="left:603px;top:464px;width:1px;height:16px;background:#c0c0c0"></i><i style="left:604px;top:464px;width:63px;height:15px;background:#fff8d5"></i><b class="t" style="left:606px;top:466px">0.0</b><i style="left:667px;top:464px;width:1px;height:16px;background:#c0c0c0"></i><i style="left:668px;top:464px;width:63px;height:15px;background:#ffd8a0"></i><b class="t" style="left:668px;top:464px">26.42</b><i style="left:731px;top:464px;width:1px;height:16px;background:#c0c0c0"></i><i style="left:732px;top:464px;width:63px;height:15px;background:#fff8d5"></i><b class="t" style="left:734px;top:466px">4280</b><i style="left:795px;top:464px;width:1px;height:16px;background:#c0c0c0"></i><i style="left:796px;top:464px;width:63px;height:15px;background:#fff8d5"></i><b class="t" style="left:798px;top:466px">14.3</b><i style="left:859px;top:464px;width:1px;height:16px;background:#c0c0c0"></i><i style="left:860px;top:464px;width:63px;height:15px;background:#fff8d5"></i><b class="t" style="left:862px;top:466px">1010.0</b><i style="left:923px;top:464px;width:1px;height:16px;background:#c0c0c0"></i><i style="left:924px;top:464px;width:63px;height:15px;background:#fff8d5"></i><b class="t" style="left:926px;top:466px">1090.0</b><i style="left:987px;top:464px;width:1px;height:16px;background:#c0c0c0"></i><i style="left:28px;top:479px;width:960px;height:1px;background:#c0c0c0"></i><i style="left:1px;top:480px;width:26px;height:15px;background:#f0f0f0"></i><i style="left:1px;top:480px;width:26px;height:1px;background:#fff"></i><i style="left:1px;top:480px;width:1px;height:15px;background:#fff"></i><i style="left:1px;top:494px;width:26px;height:1px;background:#a0a0a0"></i><i style="left:26px;top:480px;width:1px;height:15px;background:#a0a0a0"></i><i style="left:1px;top:495px;width:26px;height:1px;background:#000"></i><i style="left:27px;top:480px;width:1px;height:16px;background:#000"></i><b class="t" style="left:0px;top:480px;width:25px;text-align:right">23</b><i style="left:28px;top:480px;width:63px;height:15px;background:#ffd8a0"></i><b class="t" style="left:28px;top:480px">28.11</b><i style="left:91px;top:480px;width:1px;height:16px;background:#c0c0c0"></i><i style="left:92px;top:480px;width:63px;height:15px;background:#fff8d5"></i><b class="t" style="left:94px;top:482px">3800</b><i style="left:155px;top:480px;width:1px;height:16px;background:#c0c0c0"></i><i style="left:156px;top:480px;width:63px;height:15px;background:#fff8d5"></i><b class="t" style="left:158px;top:482px">10.78</b><i style="left:219px;top:480px;width:1px;height:16px;background:#c0c0c0"></i><i style="left:220px;top:480px;width:63px;height:15px;background:#fff8d5"></i><b class="t" style="left:222px;top:482px">6.7</b><i style="left:283px;top:480px;width:1px;height:16px;background:#c0c0c0"></i><i style="left:284px;top:480px;width:63px;height:15px;background:#fff8d5"></i><b class="t" style="left:286px;top:482px">3.8</b><i style="left:347px;top:480px;width:1px;height:16px;background:#c0c0c0"></i><i style="left:348px;top:480px;width:63px;height:15px;background:#ffd8a0"></i><b class="t" style="left:348px;top:480px">28.51</b><i style="left:411px;top:480px;width:1px;height:16px;background:#c0c0c0"></i><i style="left:412px;top:480px;width:63px;height:15px;background:#fff8d5"></i><b class="t" style="left:414px;top:482px">118.8</b><i style="left:475px;top:480px;width:1px;height:16px;background:#c0c0c0"></i><i style="left:476px;top:480px;width:63px;height:15px;background:#fff8d5"></i><b class="t" style="left:478px;top:482px">117.9</b><i style="left:539px;top:480px;width:1px;height:16px;background:#c0c0c0"></i><i style="left:540px;top:480px;width:63px;height:15px;background:#fff8d5"></i><b class="t" style="left:542px;top:482px">14.3</b><i style="left:603px;top:480px;width:1px;height:16px;background:#c0c0c0"></i><i style="left:604px;top:480px;width:63px;height:15px;background:#fff8d5"></i><b class="t" style="left:606px;top:482px">0.0</b><i style="left:667px;top:480px;width:1px;height:16px;background:#c0c0c0"></i><i style="left:668px;top:480px;width:63px;height:15px;background:#ffd8a0"></i><b class="t" style="left:668px;top:480px">27.71</b><i style="left:731px;top:480px;width:1px;height:16px;background:#c0c0c0"></i><i style="left:732px;top:480px;width:63px;height:15px;background:#fff8d5"></i><b class="t" style="left:734px;top:482px">3920</b><i style="left:795px;top:480px;width:1px;height:16px;background:#c0c0c0"></i><i style="left:796px;top:480px;width:63px;height:15px;background:#fff8d5"></i><b class="t" style="left:798px;top:482px">15.0</b><i style="left:859px;top:480px;width:1px;height:16px;background:#c0c0c0"></i><i style="left:860px;top:480px;width:63px;height:15px;background:#fff8d5"></i><b class="t" style="left:862px;top:482px">1010.0</b><i style="left:923px;top:480px;width:1px;height:16px;background:#c0c0c0"></i><i style="left:924px;top:480px;width:63px;height:15px;background:#fff8d5"></i><b class="t" style="left:926px;top:482px">1090.0</b><i style="left:987px;top:480px;width:1px;height:16px;background:#c0c0c0"></i><i style="left:28px;top:495px;width:960px;height:1px;background:#c0c0c0"></i><i style="left:1px;top:496px;width:26px;height:15px;background:#f0f0f0"></i><i style="left:1px;top:496px;width:26px;height:1px;background:#fff"></i><i style="left:1px;top:496px;width:1px;height:15px;background:#fff"></i><i style="left:1px;top:510px;width:26px;height:1px;background:#a0a0a0"></i><i style="left:26px;top:496px;width:1px;height:15px;background:#a0a0a0"></i><i style="left:1px;top:511px;width:26px;height:1px;background:#000"></i><i style="left:27px;top:496px;width:1px;height:16px;background:#000"></i><b class="t" style="left:0px;top:496px;width:25px;text-align:right">24</b><i style="left:28px;top:496px;width:63px;height:15px;background:#ffd8a0"></i><b class="t" style="left:28px;top:496px">29.33</b><i style="left:91px;top:496px;width:1px;height:16px;background:#c0c0c0"></i><i style="left:92px;top:496px;width:63px;height:15px;background:#fff8d5"></i><b class="t" style="left:94px;top:498px">3520</b><i style="left:155px;top:496px;width:1px;height:16px;background:#c0c0c0"></i><i style="left:156px;top:496px;width:63px;height:15px;background:#fff8d5"></i><b class="t" style="left:158px;top:498px">9.75</b><i style="left:219px;top:496px;width:1px;height:16px;background:#c0c0c0"></i><i style="left:220px;top:496px;width:63px;height:15px;background:#fff8d5"></i><b class="t" style="left:222px;top:498px">5.9</b><i style="left:283px;top:496px;width:1px;height:16px;background:#c0c0c0"></i><i style="left:284px;top:496px;width:63px;height:15px;background:#fff8d5"></i><b class="t" style="left:286px;top:498px">3.8</b><i style="left:347px;top:496px;width:1px;height:16px;background:#c0c0c0"></i><i style="left:348px;top:496px;width:63px;height:15px;background:#ffd8a0"></i><b class="t" style="left:348px;top:496px">29.73</b><i style="left:411px;top:496px;width:1px;height:16px;background:#c0c0c0"></i><i style="left:412px;top:496px;width:63px;height:15px;background:#fff8d5"></i><b class="t" style="left:414px;top:498px">119.5</b><i style="left:475px;top:496px;width:1px;height:16px;background:#c0c0c0"></i><i style="left:476px;top:496px;width:63px;height:15px;background:#fff8d5"></i><b class="t" style="left:478px;top:498px">117.9</b><i style="left:539px;top:496px;width:1px;height:16px;background:#c0c0c0"></i><i style="left:540px;top:496px;width:63px;height:15px;background:#fff8d5"></i><b class="t" style="left:542px;top:498px">14.3</b><i style="left:603px;top:496px;width:1px;height:16px;background:#c0c0c0"></i><i style="left:604px;top:496px;width:63px;height:15px;background:#fff8d5"></i><b class="t" style="left:606px;top:498px">0.0</b><i style="left:667px;top:496px;width:1px;height:16px;background:#c0c0c0"></i><i style="left:668px;top:496px;width:63px;height:15px;background:#ffd8a0"></i><b class="t" style="left:668px;top:496px">28.93</b><i style="left:731px;top:496px;width:1px;height:16px;background:#c0c0c0"></i><i style="left:732px;top:496px;width:63px;height:15px;background:#fff8d5"></i><b class="t" style="left:734px;top:498px">3560</b><i style="left:795px;top:496px;width:1px;height:16px;background:#c0c0c0"></i><i style="left:796px;top:496px;width:63px;height:15px;background:#fff8d5"></i><b class="t" style="left:798px;top:498px">14.3</b><i style="left:859px;top:496px;width:1px;height:16px;background:#c0c0c0"></i><i style="left:860px;top:496px;width:63px;height:15px;background:#fff8d5"></i><b class="t" style="left:862px;top:498px">1010.0</b><i style="left:923px;top:496px;width:1px;height:16px;background:#c0c0c0"></i><i style="left:924px;top:496px;width:63px;height:15px;background:#fff8d5"></i><b class="t" style="left:926px;top:498px">1090.0</b><i style="left:987px;top:496px;width:1px;height:16px;background:#c0c0c0"></i><i style="left:28px;top:511px;width:960px;height:1px;background:#c0c0c0"></i><i style="left:1px;top:512px;width:26px;height:15px;background:#f0f0f0"></i><i style="left:1px;top:512px;width:26px;height:1px;background:#fff"></i><i style="left:1px;top:512px;width:1px;height:15px;background:#fff"></i><i style="left:1px;top:526px;width:26px;height:1px;background:#a0a0a0"></i><i style="left:26px;top:512px;width:1px;height:15px;background:#a0a0a0"></i><i style="left:1px;top:527px;width:26px;height:1px;background:#000"></i><i style="left:27px;top:512px;width:1px;height:16px;background:#000"></i><b class="t" style="left:0px;top:512px;width:25px;text-align:right">25</b><i style="left:28px;top:512px;width:63px;height:15px;background:#ffd8a0"></i><b class="t" style="left:28px;top:512px">30.53</b><i style="left:91px;top:512px;width:1px;height:16px;background:#c0c0c0"></i><i style="left:92px;top:512px;width:63px;height:15px;background:#fff8d5"></i><b class="t" style="left:94px;top:514px">3280</b><i style="left:155px;top:512px;width:1px;height:16px;background:#c0c0c0"></i><i style="left:156px;top:512px;width:63px;height:15px;background:#fff8d5"></i><b class="t" style="left:158px;top:514px">9.06</b><i style="left:219px;top:512px;width:1px;height:16px;background:#c0c0c0"></i><i style="left:220px;top:512px;width:63px;height:15px;background:#fff8d5"></i><b class="t" style="left:222px;top:514px">5.5</b><i style="left:283px;top:512px;width:1px;height:16px;background:#c0c0c0"></i><i style="left:284px;top:512px;width:63px;height:15px;background:#fff8d5"></i><b class="t" style="left:286px;top:514px">3.0</b><i style="left:347px;top:512px;width:1px;height:16px;background:#c0c0c0"></i><i style="left:348px;top:512px;width:63px;height:15px;background:#ffd8a0"></i><b class="t" style="left:348px;top:512px">30.93</b><i style="left:411px;top:512px;width:1px;height:16px;background:#c0c0c0"></i><i style="left:412px;top:512px;width:63px;height:15px;background:#fff8d5"></i><b class="t" style="left:414px;top:514px">119.5</b><i style="left:475px;top:512px;width:1px;height:16px;background:#c0c0c0"></i><i style="left:476px;top:512px;width:63px;height:15px;background:#fff8d5"></i><b class="t" style="left:478px;top:514px">117.9</b><i style="left:539px;top:512px;width:1px;height:16px;background:#c0c0c0"></i><i style="left:540px;top:512px;width:63px;height:15px;background:#fff8d5"></i><b class="t" style="left:542px;top:514px">14.3</b><i style="left:603px;top:512px;width:1px;height:16px;background:#c0c0c0"></i><i style="left:604px;top:512px;width:63px;height:15px;background:#fff8d5"></i><b class="t" style="left:606px;top:514px">0.0</b><i style="left:667px;top:512px;width:1px;height:16px;background:#c0c0c0"></i><i style="left:668px;top:512px;width:63px;height:15px;background:#ffd8a0"></i><b class="t" style="left:668px;top:512px">30.13</b><i style="left:731px;top:512px;width:1px;height:16px;background:#c0c0c0"></i><i style="left:732px;top:512px;width:63px;height:15px;background:#fff8d5"></i><b class="t" style="left:734px;top:514px">3360</b><i style="left:795px;top:512px;width:1px;height:16px;background:#c0c0c0"></i><i style="left:796px;top:512px;width:63px;height:15px;background:#fff8d5"></i><b class="t" style="left:798px;top:514px">13.5</b><i style="left:859px;top:512px;width:1px;height:16px;background:#c0c0c0"></i><i style="left:860px;top:512px;width:63px;height:15px;background:#fff8d5"></i><b class="t" style="left:862px;top:514px">1010.0</b><i style="left:923px;top:512px;width:1px;height:16px;background:#c0c0c0"></i><i style="left:924px;top:512px;width:63px;height:15px;background:#fff8d5"></i><b class="t" style="left:926px;top:514px">1090.0</b><i style="left:987px;top:512px;width:1px;height:16px;background:#c0c0c0"></i><i style="left:28px;top:527px;width:960px;height:1px;background:#c0c0c0"></i><i style="left:1px;top:528px;width:26px;height:15px;background:#f0f0f0"></i><i style="left:1px;top:528px;width:26px;height:1px;background:#fff"></i><i style="left:1px;top:528px;width:1px;height:15px;background:#fff"></i><i style="left:1px;top:542px;width:26px;height:1px;background:#a0a0a0"></i><i style="left:26px;top:528px;width:1px;height:15px;background:#a0a0a0"></i><i style="left:1px;top:543px;width:26px;height:1px;background:#000"></i><i style="left:27px;top:528px;width:1px;height:16px;background:#000"></i><b class="t" style="left:0px;top:528px;width:25px;text-align:right">26</b><i style="left:28px;top:528px;width:63px;height:15px;background:#ffd8a0"></i><b class="t" style="left:28px;top:528px">31.84</b><i style="left:91px;top:528px;width:1px;height:16px;background:#c0c0c0"></i><i style="left:92px;top:528px;width:63px;height:15px;background:#fff8d5"></i><b class="t" style="left:94px;top:530px">3080</b><i style="left:155px;top:528px;width:1px;height:16px;background:#c0c0c0"></i><i style="left:156px;top:528px;width:63px;height:15px;background:#fff8d5"></i><b class="t" style="left:158px;top:530px">8.03</b><i style="left:219px;top:528px;width:1px;height:16px;background:#c0c0c0"></i><i style="left:220px;top:528px;width:63px;height:15px;background:#fff8d5"></i><b class="t" style="left:222px;top:530px">5.1</b><i style="left:283px;top:528px;width:1px;height:16px;background:#c0c0c0"></i><i style="left:284px;top:528px;width:63px;height:15px;background:#fff8d5"></i><b class="t" style="left:286px;top:530px">3.0</b><i style="left:347px;top:528px;width:1px;height:16px;background:#c0c0c0"></i><i style="left:348px;top:528px;width:63px;height:15px;background:#ffd8a0"></i><b class="t" style="left:348px;top:528px">32.24</b><i style="left:411px;top:528px;width:1px;height:16px;background:#c0c0c0"></i><i style="left:412px;top:528px;width:63px;height:15px;background:#fff8d5"></i><b class="t" style="left:414px;top:530px">118.8</b><i style="left:475px;top:528px;width:1px;height:16px;background:#c0c0c0"></i><i style="left:476px;top:528px;width:63px;height:15px;background:#fff8d5"></i><b class="t" style="left:478px;top:530px">117.9</b><i style="left:539px;top:528px;width:1px;height:16px;background:#c0c0c0"></i><i style="left:540px;top:528px;width:63px;height:15px;background:#fff8d5"></i><b class="t" style="left:542px;top:530px">13.5</b><i style="left:603px;top:528px;width:1px;height:16px;background:#c0c0c0"></i><i style="left:604px;top:528px;width:63px;height:15px;background:#fff8d5"></i><b class="t" style="left:606px;top:530px">0.0</b><i style="left:667px;top:528px;width:1px;height:16px;background:#c0c0c0"></i><i style="left:668px;top:528px;width:63px;height:15px;background:#ffd8a0"></i><b class="t" style="left:668px;top:528px">31.35</b><i style="left:731px;top:528px;width:1px;height:16px;background:#c0c0c0"></i><i style="left:732px;top:528px;width:63px;height:15px;background:#fff8d5"></i><b class="t" style="left:734px;top:530px">3200</b><i style="left:795px;top:528px;width:1px;height:16px;background:#c0c0c0"></i><i style="left:796px;top:528px;width:63px;height:15px;background:#fff8d5"></i><b class="t" style="left:798px;top:530px">14.3</b><i style="left:859px;top:528px;width:1px;height:16px;background:#c0c0c0"></i><i style="left:860px;top:528px;width:63px;height:15px;background:#fff8d5"></i><b class="t" style="left:862px;top:530px">1010.0</b><i style="left:923px;top:528px;width:1px;height:16px;background:#c0c0c0"></i><i style="left:924px;top:528px;width:63px;height:15px;background:#fff8d5"></i><b class="t" style="left:926px;top:530px">1080.0</b><i style="left:987px;top:528px;width:1px;height:16px;background:#c0c0c0"></i><i style="left:28px;top:543px;width:960px;height:1px;background:#c0c0c0"></i><i style="left:1px;top:544px;width:26px;height:15px;background:#f0f0f0"></i><i style="left:1px;top:544px;width:26px;height:1px;background:#fff"></i><i style="left:1px;top:544px;width:1px;height:15px;background:#fff"></i><i style="left:1px;top:558px;width:26px;height:1px;background:#a0a0a0"></i><i style="left:26px;top:544px;width:1px;height:15px;background:#a0a0a0"></i><i style="left:1px;top:559px;width:26px;height:1px;background:#000"></i><i style="left:27px;top:544px;width:1px;height:16px;background:#000"></i><b class="t" style="left:0px;top:544px;width:25px;text-align:right">27</b><i style="left:28px;top:544px;width:63px;height:15px;background:#ffd8a0"></i><b class="t" style="left:28px;top:544px">33.04</b><i style="left:91px;top:544px;width:1px;height:16px;background:#c0c0c0"></i><i style="left:92px;top:544px;width:63px;height:15px;background:#fff8d5"></i><b class="t" style="left:94px;top:546px">2800</b><i style="left:155px;top:544px;width:1px;height:16px;background:#c0c0c0"></i><i style="left:156px;top:544px;width:63px;height:15px;background:#fff8d5"></i><b class="t" style="left:158px;top:546px">7.64</b><i style="left:219px;top:544px;width:1px;height:16px;background:#c0c0c0"></i><i style="left:220px;top:544px;width:63px;height:15px;background:#fff8d5"></i><b class="t" style="left:222px;top:546px">4.7</b><i style="left:283px;top:544px;width:1px;height:16px;background:#c0c0c0"></i><i style="left:284px;top:544px;width:63px;height:15px;background:#fff8d5"></i><b class="t" style="left:286px;top:546px">2.3</b><i style="left:347px;top:544px;width:1px;height:16px;background:#c0c0c0"></i><i style="left:348px;top:544px;width:63px;height:15px;background:#ffd8a0"></i><b class="t" style="left:348px;top:544px">33.46</b><i style="left:411px;top:544px;width:1px;height:16px;background:#c0c0c0"></i><i style="left:412px;top:544px;width:63px;height:15px;background:#fff8d5"></i><b class="t" style="left:414px;top:546px">118.0</b><i style="left:475px;top:544px;width:1px;height:16px;background:#c0c0c0"></i><i style="left:476px;top:544px;width:63px;height:15px;background:#fff8d5"></i><b class="t" style="left:478px;top:546px">116.4</b><i style="left:539px;top:544px;width:1px;height:16px;background:#c0c0c0"></i><i style="left:540px;top:544px;width:63px;height:15px;background:#fff8d5"></i><b class="t" style="left:542px;top:546px">14.3</b><i style="left:603px;top:544px;width:1px;height:16px;background:#c0c0c0"></i><i style="left:604px;top:544px;width:63px;height:15px;background:#fff8d5"></i><b class="t" style="left:606px;top:546px">0.0</b><i style="left:667px;top:544px;width:1px;height:16px;background:#c0c0c0"></i><i style="left:668px;top:544px;width:63px;height:15px;background:#ffd8a0"></i><b class="t" style="left:668px;top:544px">32.64</b><i style="left:731px;top:544px;width:1px;height:16px;background:#c0c0c0"></i><i style="left:732px;top:544px;width:63px;height:15px;background:#fff8d5"></i><b class="t" style="left:734px;top:546px">2880</b><i style="left:795px;top:544px;width:1px;height:16px;background:#c0c0c0"></i><i style="left:796px;top:544px;width:63px;height:15px;background:#fff8d5"></i><b class="t" style="left:798px;top:546px">13.5</b><i style="left:859px;top:544px;width:1px;height:16px;background:#c0c0c0"></i><i style="left:860px;top:544px;width:63px;height:15px;background:#fff8d5"></i><b class="t" style="left:862px;top:546px">1010.0</b><i style="left:923px;top:544px;width:1px;height:16px;background:#c0c0c0"></i><i style="left:924px;top:544px;width:63px;height:15px;background:#fff8d5"></i><b class="t" style="left:926px;top:546px">1080.0</b><i style="left:987px;top:544px;width:1px;height:16px;background:#c0c0c0"></i><i style="left:28px;top:559px;width:960px;height:1px;background:#c0c0c0"></i><i style="left:1px;top:560px;width:26px;height:15px;background:#f0f0f0"></i><i style="left:1px;top:560px;width:26px;height:1px;background:#fff"></i><i style="left:1px;top:560px;width:1px;height:15px;background:#fff"></i><i style="left:1px;top:574px;width:26px;height:1px;background:#a0a0a0"></i><i style="left:26px;top:560px;width:1px;height:15px;background:#a0a0a0"></i><i style="left:1px;top:575px;width:26px;height:1px;background:#000"></i><i style="left:27px;top:560px;width:1px;height:16px;background:#000"></i><b class="t" style="left:0px;top:560px;width:25px;text-align:right">28</b><i style="left:28px;top:560px;width:63px;height:15px;background:#ffd8a0"></i><b class="t" style="left:28px;top:560px">34.34</b><i style="left:91px;top:560px;width:1px;height:16px;background:#c0c0c0"></i><i style="left:92px;top:560px;width:63px;height:15px;background:#fff8d5"></i><b class="t" style="left:94px;top:562px">2320</b><i style="left:155px;top:560px;width:1px;height:16px;background:#c0c0c0"></i><i style="left:156px;top:560px;width:63px;height:15px;background:#fff8d5"></i><b class="t" style="left:158px;top:562px">6.22</b><i style="left:219px;top:560px;width:1px;height:16px;background:#c0c0c0"></i><i style="left:220px;top:560px;width:63px;height:15px;background:#fff8d5"></i><b class="t" style="left:222px;top:562px">3.9</b><i style="left:283px;top:560px;width:1px;height:16px;background:#c0c0c0"></i><i style="left:284px;top:560px;width:63px;height:15px;background:#fff8d5"></i><b class="t" style="left:286px;top:562px">1.5</b><i style="left:347px;top:560px;width:1px;height:16px;background:#c0c0c0"></i><i style="left:348px;top:560px;width:63px;height:15px;background:#ffd8a0"></i><b class="t" style="left:348px;top:560px">34.75</b><i style="left:411px;top:560px;width:1px;height:16px;background:#c0c0c0"></i><i style="left:412px;top:560px;width:63px;height:15px;background:#fff8d5"></i><b class="t" style="left:414px;top:562px">124.1</b><i style="left:475px;top:560px;width:1px;height:16px;background:#c0c0c0"></i><i style="left:476px;top:560px;width:63px;height:15px;background:#fff8d5"></i><b class="t" style="left:478px;top:562px">122.4</b><i style="left:539px;top:560px;width:1px;height:16px;background:#c0c0c0"></i><i style="left:540px;top:560px;width:63px;height:15px;background:#fff8d5"></i><b class="t" style="left:542px;top:562px">14.3</b><i style="left:603px;top:560px;width:1px;height:16px;background:#c0c0c0"></i><i style="left:604px;top:560px;width:63px;height:15px;background:#fff8d5"></i><b class="t" style="left:606px;top:562px">0.0</b><i style="left:667px;top:560px;width:1px;height:16px;background:#c0c0c0"></i><i style="left:668px;top:560px;width:63px;height:15px;background:#ffd8a0"></i><b class="t" style="left:668px;top:560px">33.94</b><i style="left:731px;top:560px;width:1px;height:16px;background:#c0c0c0"></i><i style="left:732px;top:560px;width:63px;height:15px;background:#fff8d5"></i><b class="t" style="left:734px;top:562px">2480</b><i style="left:795px;top:560px;width:1px;height:16px;background:#c0c0c0"></i><i style="left:796px;top:560px;width:63px;height:15px;background:#fff8d5"></i><b class="t" style="left:798px;top:562px">14.3</b><i style="left:859px;top:560px;width:1px;height:16px;background:#c0c0c0"></i><i style="left:860px;top:560px;width:63px;height:15px;background:#fff8d5"></i><b class="t" style="left:862px;top:562px">1010.0</b><i style="left:923px;top:560px;width:1px;height:16px;background:#c0c0c0"></i><i style="left:924px;top:560px;width:63px;height:15px;background:#fff8d5"></i><b class="t" style="left:926px;top:562px">1070.0</b><i style="left:987px;top:560px;width:1px;height:16px;background:#c0c0c0"></i><i style="left:28px;top:575px;width:960px;height:1px;background:#c0c0c0"></i><i style="left:1px;top:576px;width:26px;height:15px;background:#f0f0f0"></i><i style="left:1px;top:576px;width:26px;height:1px;background:#fff"></i><i style="left:1px;top:576px;width:1px;height:15px;background:#fff"></i><i style="left:1px;top:590px;width:26px;height:1px;background:#a0a0a0"></i><i style="left:26px;top:576px;width:1px;height:15px;background:#a0a0a0"></i><i style="left:1px;top:591px;width:26px;height:1px;background:#000"></i><i style="left:27px;top:576px;width:1px;height:16px;background:#000"></i><b class="t" style="left:0px;top:576px;width:25px;text-align:right">29</b><i style="left:28px;top:576px;width:63px;height:15px;background:#ffd8a0"></i><b class="t" style="left:28px;top:576px">35.55</b><i style="left:91px;top:576px;width:1px;height:16px;background:#c0c0c0"></i><i style="left:92px;top:576px;width:63px;height:15px;background:#fff8d5"></i><b class="t" style="left:94px;top:578px">1800</b><i style="left:155px;top:576px;width:1px;height:16px;background:#c0c0c0"></i><i style="left:156px;top:576px;width:63px;height:15px;background:#fff8d5"></i><b class="t" style="left:158px;top:578px">4.92</b><i style="left:219px;top:576px;width:1px;height:16px;background:#c0c0c0"></i><i style="left:220px;top:576px;width:63px;height:15px;background:#fff8d5"></i><b class="t" style="left:222px;top:578px">2.7</b><i style="left:283px;top:576px;width:1px;height:16px;background:#c0c0c0"></i><i style="left:284px;top:576px;width:63px;height:15px;background:#fff8d5"></i><b class="t" style="left:286px;top:578px">0.8</b><i style="left:347px;top:576px;width:1px;height:16px;background:#c0c0c0"></i><i style="left:348px;top:576px;width:63px;height:15px;background:#ffd8a0"></i><b class="t" style="left:348px;top:576px">35.95</b><i style="left:411px;top:576px;width:1px;height:16px;background:#c0c0c0"></i><i style="left:412px;top:576px;width:63px;height:15px;background:#fff8d5"></i><b class="t" style="left:414px;top:578px">119.5</b><i style="left:475px;top:576px;width:1px;height:16px;background:#c0c0c0"></i><i style="left:476px;top:576px;width:63px;height:15px;background:#fff8d5"></i><b class="t" style="left:478px;top:578px">117.9</b><i style="left:539px;top:576px;width:1px;height:16px;background:#c0c0c0"></i><i style="left:540px;top:576px;width:63px;height:15px;background:#fff8d5"></i><b class="t" style="left:542px;top:578px">14.3</b><i style="left:603px;top:576px;width:1px;height:16px;background:#c0c0c0"></i><i style="left:604px;top:576px;width:63px;height:15px;background:#fff8d5"></i><b class="t" style="left:606px;top:578px">0.0</b><i style="left:667px;top:576px;width:1px;height:16px;background:#c0c0c0"></i><i style="left:668px;top:576px;width:63px;height:15px;background:#ffd8a0"></i><b class="t" style="left:668px;top:576px">35.15</b><i style="left:731px;top:576px;width:1px;height:16px;background:#c0c0c0"></i><i style="left:732px;top:576px;width:63px;height:15px;background:#fff8d5"></i><b class="t" style="left:734px;top:578px">1960</b><i style="left:795px;top:576px;width:1px;height:16px;background:#c0c0c0"></i><i style="left:796px;top:576px;width:63px;height:15px;background:#fff8d5"></i><b class="t" style="left:798px;top:578px">14.3</b><i style="left:859px;top:576px;width:1px;height:16px;background:#c0c0c0"></i><i style="left:860px;top:576px;width:63px;height:15px;background:#fff8d5"></i><b class="t" style="left:862px;top:578px">1010.0</b><i style="left:923px;top:576px;width:1px;height:16px;background:#c0c0c0"></i><i style="left:924px;top:576px;width:63px;height:15px;background:#fff8d5"></i><b class="t" style="left:926px;top:578px">1060.0</b><i style="left:987px;top:576px;width:1px;height:16px;background:#c0c0c0"></i><i style="left:28px;top:591px;width:960px;height:1px;background:#c0c0c0"></i><i style="left:1px;top:592px;width:26px;height:15px;background:#f0f0f0"></i><i style="left:1px;top:592px;width:26px;height:1px;background:#fff"></i><i style="left:1px;top:592px;width:1px;height:15px;background:#fff"></i><i style="left:1px;top:606px;width:26px;height:1px;background:#a0a0a0"></i><i style="left:26px;top:592px;width:1px;height:15px;background:#a0a0a0"></i><i style="left:1px;top:607px;width:26px;height:1px;background:#000"></i><i style="left:27px;top:592px;width:1px;height:16px;background:#000"></i><b class="t" style="left:0px;top:592px;width:25px;text-align:right">30</b><i style="left:28px;top:592px;width:63px;height:15px;background:#ffd8a0"></i><b class="t" style="left:28px;top:592px">36.75</b><i style="left:91px;top:592px;width:1px;height:16px;background:#c0c0c0"></i><i style="left:92px;top:592px;width:63px;height:15px;background:#fff8d5"></i><b class="t" style="left:94px;top:594px">1280</b><i style="left:155px;top:592px;width:1px;height:16px;background:#c0c0c0"></i><i style="left:156px;top:592px;width:63px;height:15px;background:#fff8d5"></i><b class="t" style="left:158px;top:594px">3.53</b><i style="left:219px;top:592px;width:1px;height:16px;background:#c0c0c0"></i><i style="left:220px;top:592px;width:63px;height:15px;background:#fff8d5"></i><b class="t" style="left:222px;top:594px">2.0</b><i style="left:283px;top:592px;width:1px;height:16px;background:#c0c0c0"></i><i style="left:284px;top:592px;width:63px;height:15px;background:#fff8d5"></i><b class="t" style="left:286px;top:594px">3.8</b><i style="left:347px;top:592px;width:1px;height:16px;background:#c0c0c0"></i><i style="left:348px;top:592px;width:63px;height:15px;background:#ffd8a0"></i><b class="t" style="left:348px;top:592px">37.15</b><i style="left:411px;top:592px;width:1px;height:16px;background:#c0c0c0"></i><i style="left:412px;top:592px;width:63px;height:15px;background:#fff8d5"></i><b class="t" style="left:414px;top:594px">93.2</b><i style="left:475px;top:592px;width:1px;height:16px;background:#c0c0c0"></i><i style="left:476px;top:592px;width:63px;height:15px;background:#fff8d5"></i><b class="t" style="left:478px;top:594px">92.5</b><i style="left:539px;top:592px;width:1px;height:16px;background:#c0c0c0"></i><i style="left:540px;top:592px;width:63px;height:15px;background:#fff8d5"></i><b class="t" style="left:542px;top:594px">15.0</b><i style="left:603px;top:592px;width:1px;height:16px;background:#c0c0c0"></i><i style="left:604px;top:592px;width:63px;height:15px;background:#fff8d5"></i><b class="t" style="left:606px;top:594px">0.0</b><i style="left:667px;top:592px;width:1px;height:16px;background:#c0c0c0"></i><i style="left:668px;top:592px;width:63px;height:15px;background:#ffd8a0"></i><b class="t" style="left:668px;top:592px">36.35</b><i style="left:731px;top:592px;width:1px;height:16px;background:#c0c0c0"></i><i style="left:732px;top:592px;width:63px;height:15px;background:#fff8d5"></i><b class="t" style="left:734px;top:594px">1400</b><i style="left:795px;top:592px;width:1px;height:16px;background:#c0c0c0"></i><i style="left:796px;top:592px;width:63px;height:15px;background:#fff8d5"></i><b class="t" style="left:798px;top:594px">13.5</b><i style="left:859px;top:592px;width:1px;height:16px;background:#c0c0c0"></i><i style="left:860px;top:592px;width:63px;height:15px;background:#fff8d5"></i><b class="t" style="left:862px;top:594px">1010.0</b><i style="left:923px;top:592px;width:1px;height:16px;background:#c0c0c0"></i><i style="left:924px;top:592px;width:63px;height:15px;background:#fff8d5"></i><b class="t" style="left:926px;top:594px">1040.0</b><i style="left:987px;top:592px;width:1px;height:16px;background:#c0c0c0"></i><i style="left:28px;top:607px;width:960px;height:1px;background:#c0c0c0"></i><i style="left:1px;top:608px;width:26px;height:15px;background:#f0f0f0"></i><i style="left:1px;top:608px;width:26px;height:1px;background:#fff"></i><i style="left:1px;top:608px;width:1px;height:15px;background:#fff"></i><i style="left:1px;top:622px;width:26px;height:1px;background:#a0a0a0"></i><i style="left:26px;top:608px;width:1px;height:15px;background:#a0a0a0"></i><i style="left:1px;top:623px;width:26px;height:1px;background:#000"></i><i style="left:27px;top:608px;width:1px;height:16px;background:#000"></i><b class="t" style="left:0px;top:608px;width:25px;text-align:right">31</b><i style="left:28px;top:608px;width:63px;height:15px;background:#ffd8a0"></i><b class="t" style="left:28px;top:608px">37.97</b><i style="left:91px;top:608px;width:1px;height:16px;background:#c0c0c0"></i><i style="left:92px;top:608px;width:63px;height:15px;background:#fff8d5"></i><b class="t" style="left:94px;top:610px">920</b><i style="left:155px;top:608px;width:1px;height:16px;background:#c0c0c0"></i><i style="left:156px;top:608px;width:63px;height:15px;background:#fff8d5"></i><b class="t" style="left:158px;top:610px">3.00</b><i style="left:219px;top:608px;width:1px;height:16px;background:#c0c0c0"></i><i style="left:220px;top:608px;width:63px;height:15px;background:#fff8d5"></i><b class="t" style="left:222px;top:610px">1.6</b><i style="left:283px;top:608px;width:1px;height:16px;background:#c0c0c0"></i><i style="left:284px;top:608px;width:63px;height:15px;background:#fff8d5"></i><b class="t" style="left:286px;top:610px">15.8</b><i style="left:347px;top:608px;width:1px;height:16px;background:#c0c0c0"></i><i style="left:348px;top:608px;width:63px;height:15px;background:#ffd8a0"></i><b class="t" style="left:348px;top:608px">38.37</b><i style="left:411px;top:608px;width:1px;height:16px;background:#c0c0c0"></i><i style="left:412px;top:608px;width:63px;height:15px;background:#fff8d5"></i><b class="t" style="left:414px;top:610px">89.5</b><i style="left:475px;top:608px;width:1px;height:16px;background:#c0c0c0"></i><i style="left:476px;top:608px;width:63px;height:15px;background:#fff8d5"></i><b class="t" style="left:478px;top:610px">88.1</b><i style="left:539px;top:608px;width:1px;height:16px;background:#c0c0c0"></i><i style="left:540px;top:608px;width:63px;height:15px;background:#fff8d5"></i><b class="t" style="left:542px;top:610px">18.0</b><i style="left:603px;top:608px;width:1px;height:16px;background:#c0c0c0"></i><i style="left:604px;top:608px;width:63px;height:15px;background:#fff8d5"></i><b class="t" style="left:606px;top:610px">0.0</b><i style="left:667px;top:608px;width:1px;height:16px;background:#c0c0c0"></i><i style="left:668px;top:608px;width:63px;height:15px;background:#ffd8a0"></i><b class="t" style="left:668px;top:608px">37.57</b><i style="left:731px;top:608px;width:1px;height:16px;background:#c0c0c0"></i><i style="left:732px;top:608px;width:63px;height:15px;background:#fff8d5"></i><b class="t" style="left:734px;top:610px">1040</b><i style="left:795px;top:608px;width:1px;height:16px;background:#c0c0c0"></i><i style="left:796px;top:608px;width:63px;height:15px;background:#fff8d5"></i><b class="t" style="left:798px;top:610px">15.8</b><i style="left:859px;top:608px;width:1px;height:16px;background:#c0c0c0"></i><i style="left:860px;top:608px;width:63px;height:15px;background:#fff8d5"></i><b class="t" style="left:862px;top:610px">1010.0</b><i style="left:923px;top:608px;width:1px;height:16px;background:#c0c0c0"></i><i style="left:924px;top:608px;width:63px;height:15px;background:#fff8d5"></i><b class="t" style="left:926px;top:610px">1020.0</b><i style="left:987px;top:608px;width:1px;height:16px;background:#c0c0c0"></i><i style="left:28px;top:623px;width:960px;height:1px;background:#c0c0c0"></i><i style="left:1px;top:624px;width:26px;height:15px;background:#f0f0f0"></i><i style="left:1px;top:624px;width:26px;height:1px;background:#fff"></i><i style="left:1px;top:624px;width:1px;height:15px;background:#fff"></i><i style="left:1px;top:638px;width:26px;height:1px;background:#a0a0a0"></i><i style="left:26px;top:624px;width:1px;height:15px;background:#a0a0a0"></i><i style="left:1px;top:639px;width:26px;height:1px;background:#000"></i><i style="left:27px;top:624px;width:1px;height:16px;background:#000"></i><b class="t" style="left:0px;top:624px;width:25px;text-align:right">32</b><i style="left:28px;top:624px;width:63px;height:15px;background:#ffd8a0"></i><b class="t" style="left:28px;top:624px">39.17</b><i style="left:91px;top:624px;width:1px;height:16px;background:#c0c0c0"></i><i style="left:92px;top:624px;width:63px;height:15px;background:#fff8d5"></i><b class="t" style="left:94px;top:626px">720</b><i style="left:155px;top:624px;width:1px;height:16px;background:#c0c0c0"></i><i style="left:156px;top:624px;width:63px;height:15px;background:#fff8d5"></i><b class="t" style="left:158px;top:626px">3.94</b><i style="left:219px;top:624px;width:1px;height:16px;background:#c0c0c0"></i><i style="left:220px;top:624px;width:63px;height:15px;background:#fff8d5"></i><b class="t" style="left:222px;top:626px">3.1</b><i style="left:283px;top:624px;width:1px;height:16px;background:#c0c0c0"></i><i style="left:284px;top:624px;width:63px;height:15px;background:#fff8d5"></i><b class="t" style="left:286px;top:626px">21.0</b><i style="left:347px;top:624px;width:1px;height:16px;background:#c0c0c0"></i><i style="left:348px;top:624px;width:63px;height:15px;background:#ffd8a0"></i><b class="t" style="left:348px;top:624px">39.57</b><i style="left:411px;top:624px;width:1px;height:16px;background:#c0c0c0"></i><i style="left:412px;top:624px;width:63px;height:15px;background:#fff8d5"></i><b class="t" style="left:414px;top:626px">89.5</b><i style="left:475px;top:624px;width:1px;height:16px;background:#c0c0c0"></i><i style="left:476px;top:624px;width:63px;height:15px;background:#fff8d5"></i><b class="t" style="left:478px;top:626px">88.1</b><i style="left:539px;top:624px;width:1px;height:16px;background:#c0c0c0"></i><i style="left:540px;top:624px;width:63px;height:15px;background:#fff8d5"></i><b class="t" style="left:542px;top:626px">21.8</b><i style="left:603px;top:624px;width:1px;height:16px;background:#c0c0c0"></i><i style="left:604px;top:624px;width:63px;height:15px;background:#fff8d5"></i><b class="t" style="left:606px;top:626px">0.0</b><i style="left:667px;top:624px;width:1px;height:16px;background:#c0c0c0"></i><i style="left:668px;top:624px;width:63px;height:15px;background:#ffd8a0"></i><b class="t" style="left:668px;top:624px">38.77</b><i style="left:731px;top:624px;width:1px;height:16px;background:#c0c0c0"></i><i style="left:732px;top:624px;width:63px;height:15px;background:#fff8d5"></i><b class="t" style="left:734px;top:626px">760</b><i style="left:795px;top:624px;width:1px;height:16px;background:#c0c0c0"></i><i style="left:796px;top:624px;width:63px;height:15px;background:#fff8d5"></i><b class="t" style="left:798px;top:626px">18.8</b><i style="left:859px;top:624px;width:1px;height:16px;background:#c0c0c0"></i><i style="left:860px;top:624px;width:63px;height:15px;background:#fff8d5"></i><b class="t" style="left:862px;top:626px">1010.0</b><i style="left:923px;top:624px;width:1px;height:16px;background:#c0c0c0"></i><i style="left:924px;top:624px;width:63px;height:15px;background:#fff8d5"></i><b class="t" style="left:926px;top:626px">1020.0</b><i style="left:987px;top:624px;width:1px;height:16px;background:#c0c0c0"></i><i style="left:28px;top:639px;width:960px;height:1px;background:#c0c0c0"></i><i style="left:1px;top:640px;width:26px;height:15px;background:#f0f0f0"></i><i style="left:1px;top:640px;width:26px;height:1px;background:#fff"></i><i style="left:1px;top:640px;width:1px;height:15px;background:#fff"></i><i style="left:1px;top:654px;width:26px;height:1px;background:#a0a0a0"></i><i style="left:26px;top:640px;width:1px;height:15px;background:#a0a0a0"></i><i style="left:1px;top:655px;width:26px;height:1px;background:#000"></i><i style="left:27px;top:640px;width:1px;height:16px;background:#000"></i><b class="t" style="left:0px;top:640px;width:25px;text-align:right">33</b><i style="left:28px;top:640px;width:63px;height:15px;background:#ffd8a0"></i><b class="t" style="left:28px;top:640px">40.38</b><i style="left:91px;top:640px;width:1px;height:16px;background:#c0c0c0"></i><i style="left:92px;top:640px;width:63px;height:15px;background:#fff8d5"></i><b class="t" style="left:94px;top:642px">760</b><i style="left:155px;top:640px;width:1px;height:16px;background:#c0c0c0"></i><i style="left:156px;top:640px;width:63px;height:15px;background:#fff8d5"></i><b class="t" style="left:158px;top:642px">2.83</b><i style="left:219px;top:640px;width:1px;height:16px;background:#c0c0c0"></i><i style="left:220px;top:640px;width:63px;height:15px;background:#fff8d5"></i><b class="t" style="left:222px;top:642px">1.6</b><i style="left:283px;top:640px;width:1px;height:16px;background:#c0c0c0"></i><i style="left:284px;top:640px;width:63px;height:15px;background:#fff8d5"></i><b class="t" style="left:286px;top:642px">18.0</b><i style="left:347px;top:640px;width:1px;height:16px;background:#c0c0c0"></i><i style="left:348px;top:640px;width:63px;height:15px;background:#ffd8a0"></i><b class="t" style="left:348px;top:640px">40.78</b><i style="left:411px;top:640px;width:1px;height:16px;background:#c0c0c0"></i><i style="left:412px;top:640px;width:63px;height:15px;background:#fff8d5"></i><b class="t" style="left:414px;top:642px">89.5</b><i style="left:475px;top:640px;width:1px;height:16px;background:#c0c0c0"></i><i style="left:476px;top:640px;width:63px;height:15px;background:#fff8d5"></i><b class="t" style="left:478px;top:642px">88.1</b><i style="left:539px;top:640px;width:1px;height:16px;background:#c0c0c0"></i><i style="left:540px;top:640px;width:63px;height:15px;background:#fff8d5"></i><b class="t" style="left:542px;top:642px">27.1</b><i style="left:603px;top:640px;width:1px;height:16px;background:#c0c0c0"></i><i style="left:604px;top:640px;width:63px;height:15px;background:#fff8d5"></i><b class="t" style="left:606px;top:642px">0.0</b><i style="left:667px;top:640px;width:1px;height:16px;background:#c0c0c0"></i><i style="left:668px;top:640px;width:63px;height:15px;background:#ffd8a0"></i><b class="t" style="left:668px;top:640px">39.97</b><i style="left:731px;top:640px;width:1px;height:16px;background:#c0c0c0"></i><i style="left:732px;top:640px;width:63px;height:15px;background:#fff8d5"></i><b class="t" style="left:734px;top:642px">840</b><i style="left:795px;top:640px;width:1px;height:16px;background:#c0c0c0"></i><i style="left:796px;top:640px;width:63px;height:15px;background:#fff8d5"></i><b class="t" style="left:798px;top:642px">19.5</b><i style="left:859px;top:640px;width:1px;height:16px;background:#c0c0c0"></i><i style="left:860px;top:640px;width:63px;height:15px;background:#fff8d5"></i><b class="t" style="left:862px;top:642px">1010.0</b><i style="left:923px;top:640px;width:1px;height:16px;background:#c0c0c0"></i><i style="left:924px;top:640px;width:63px;height:15px;background:#fff8d5"></i><b class="t" style="left:926px;top:642px">1020.0</b><i style="left:987px;top:640px;width:1px;height:16px;background:#c0c0c0"></i><i style="left:28px;top:655px;width:960px;height:1px;background:#c0c0c0"></i><i style="left:1px;top:656px;width:26px;height:15px;background:#f0f0f0"></i><i style="left:1px;top:656px;width:26px;height:1px;background:#fff"></i><i style="left:1px;top:656px;width:1px;height:15px;background:#fff"></i><i style="left:1px;top:670px;width:26px;height:1px;background:#a0a0a0"></i><i style="left:26px;top:656px;width:1px;height:15px;background:#a0a0a0"></i><i style="left:1px;top:671px;width:26px;height:1px;background:#000"></i><i style="left:27px;top:656px;width:1px;height:16px;background:#000"></i><b class="t" style="left:0px;top:656px;width:25px;text-align:right">34</b><i style="left:28px;top:656px;width:63px;height:15px;background:#ffd8a0"></i><b class="t" style="left:28px;top:656px">41.58</b><i style="left:91px;top:656px;width:1px;height:16px;background:#c0c0c0"></i><i style="left:92px;top:656px;width:63px;height:15px;background:#fff8d5"></i><b class="t" style="left:94px;top:658px">760</b><i style="left:155px;top:656px;width:1px;height:16px;background:#c0c0c0"></i><i style="left:156px;top:656px;width:63px;height:15px;background:#fff8d5"></i><b class="t" style="left:158px;top:658px">3.31</b><i style="left:219px;top:656px;width:1px;height:16px;background:#c0c0c0"></i><i style="left:220px;top:656px;width:63px;height:15px;background:#fff8d5"></i><b class="t" style="left:222px;top:658px">2.4</b><i style="left:283px;top:656px;width:1px;height:16px;background:#c0c0c0"></i><i style="left:284px;top:656px;width:63px;height:15px;background:#fff8d5"></i><b class="t" style="left:286px;top:658px">9.0</b><i style="left:347px;top:656px;width:1px;height:16px;background:#c0c0c0"></i><i style="left:348px;top:656px;width:63px;height:15px;background:#ffd8a0"></i><b class="t" style="left:348px;top:656px">41.98</b><i style="left:411px;top:656px;width:1px;height:16px;background:#c0c0c0"></i><i style="left:412px;top:656px;width:63px;height:15px;background:#fff8d5"></i><b class="t" style="left:414px;top:658px">89.5</b><i style="left:475px;top:656px;width:1px;height:16px;background:#c0c0c0"></i><i style="left:476px;top:656px;width:63px;height:15px;background:#fff8d5"></i><b class="t" style="left:478px;top:658px">88.1</b><i style="left:539px;top:656px;width:1px;height:16px;background:#c0c0c0"></i><i style="left:540px;top:656px;width:63px;height:15px;background:#fff8d5"></i><b class="t" style="left:542px;top:658px">23.3</b><i style="left:603px;top:656px;width:1px;height:16px;background:#c0c0c0"></i><i style="left:604px;top:656px;width:63px;height:15px;background:#fff8d5"></i><b class="t" style="left:606px;top:658px">0.0</b><i style="left:667px;top:656px;width:1px;height:16px;background:#c0c0c0"></i><i style="left:668px;top:656px;width:63px;height:15px;background:#ffd8a0"></i><b class="t" style="left:668px;top:656px">41.19</b><i style="left:731px;top:656px;width:1px;height:16px;background:#c0c0c0"></i><i style="left:732px;top:656px;width:63px;height:15px;background:#fff8d5"></i><b class="t" style="left:734px;top:658px">760</b><i style="left:795px;top:656px;width:1px;height:16px;background:#c0c0c0"></i><i style="left:796px;top:656px;width:63px;height:15px;background:#fff8d5"></i><b class="t" style="left:798px;top:658px">24.1</b><i style="left:859px;top:656px;width:1px;height:16px;background:#c0c0c0"></i><i style="left:860px;top:656px;width:63px;height:15px;background:#fff8d5"></i><b class="t" style="left:862px;top:658px">1010.0</b><i style="left:923px;top:656px;width:1px;height:16px;background:#c0c0c0"></i><i style="left:924px;top:656px;width:63px;height:15px;background:#fff8d5"></i><b class="t" style="left:926px;top:658px">1020.0</b><i style="left:987px;top:656px;width:1px;height:16px;background:#c0c0c0"></i><i style="left:28px;top:671px;width:960px;height:1px;background:#c0c0c0"></i><i style="left:28px;top:128px;width:64px;height:1px;background:linear-gradient(90deg,transparent 50%,#7fff00 50%);background-size:2px 1px"></i><i style="left:28px;top:142px;width:64px;height:1px;background:linear-gradient(90deg,transparent 50%,#7fff00 50%);background-size:2px 1px"></i><i style="left:92px;top:128px;width:64px;height:1px;background:linear-gradient(90deg,transparent 50%,#cc6600 50%);background-size:2px 1px"></i><i style="left:92px;top:142px;width:64px;height:1px;background:linear-gradient(90deg,transparent 50%,#cc6600 50%);background-size:2px 1px"></i><i style="left:156px;top:128px;width:64px;height:1px;background:linear-gradient(90deg,transparent 50%,#cc6600 50%);background-size:2px 1px"></i><i style="left:156px;top:142px;width:64px;height:1px;background:linear-gradient(90deg,transparent 50%,#cc6600 50%);background-size:2px 1px"></i><i style="left:220px;top:128px;width:64px;height:1px;background:linear-gradient(90deg,transparent 50%,#cc6600 50%);background-size:2px 1px"></i><i style="left:220px;top:142px;width:64px;height:1px;background:linear-gradient(90deg,transparent 50%,#cc6600 50%);background-size:2px 1px"></i><i style="left:284px;top:128px;width:64px;height:1px;background:linear-gradient(90deg,transparent 50%,#cc6600 50%);background-size:2px 1px"></i><i style="left:284px;top:142px;width:64px;height:1px;background:linear-gradient(90deg,transparent 50%,#cc6600 50%);background-size:2px 1px"></i><i style="left:348px;top:128px;width:64px;height:1px;background:linear-gradient(90deg,transparent 50%,#7fff00 50%);background-size:2px 1px"></i><i style="left:348px;top:142px;width:64px;height:1px;background:linear-gradient(90deg,transparent 50%,#7fff00 50%);background-size:2px 1px"></i><i style="left:412px;top:128px;width:64px;height:1px;background:linear-gradient(90deg,transparent 50%,#cc6600 50%);background-size:2px 1px"></i><i style="left:412px;top:142px;width:64px;height:1px;background:linear-gradient(90deg,transparent 50%,#cc6600 50%);background-size:2px 1px"></i><i style="left:476px;top:128px;width:64px;height:1px;background:linear-gradient(90deg,transparent 50%,#cc6600 50%);background-size:2px 1px"></i><i style="left:476px;top:142px;width:64px;height:1px;background:linear-gradient(90deg,transparent 50%,#cc6600 50%);background-size:2px 1px"></i><i style="left:540px;top:128px;width:64px;height:1px;background:linear-gradient(90deg,transparent 50%,#cc6600 50%);background-size:2px 1px"></i><i style="left:540px;top:142px;width:64px;height:1px;background:linear-gradient(90deg,transparent 50%,#cc6600 50%);background-size:2px 1px"></i><i style="left:604px;top:128px;width:64px;height:1px;background:linear-gradient(90deg,transparent 50%,#cc6600 50%);background-size:2px 1px"></i><i style="left:604px;top:142px;width:64px;height:1px;background:linear-gradient(90deg,transparent 50%,#cc6600 50%);background-size:2px 1px"></i><i style="left:668px;top:128px;width:64px;height:1px;background:linear-gradient(90deg,transparent 50%,#7fff00 50%);background-size:2px 1px"></i><i style="left:668px;top:142px;width:64px;height:1px;background:linear-gradient(90deg,transparent 50%,#7fff00 50%);background-size:2px 1px"></i><i style="left:732px;top:128px;width:64px;height:1px;background:linear-gradient(90deg,transparent 50%,#cc6600 50%);background-size:2px 1px"></i><i style="left:732px;top:142px;width:64px;height:1px;background:linear-gradient(90deg,transparent 50%,#cc6600 50%);background-size:2px 1px"></i><i style="left:796px;top:128px;width:64px;height:1px;background:linear-gradient(90deg,transparent 50%,#cc6600 50%);background-size:2px 1px"></i><i style="left:796px;top:142px;width:64px;height:1px;background:linear-gradient(90deg,transparent 50%,#cc6600 50%);background-size:2px 1px"></i><i style="left:860px;top:128px;width:64px;height:1px;background:linear-gradient(90deg,transparent 50%,#cc6600 50%);background-size:2px 1px"></i><i style="left:860px;top:142px;width:64px;height:1px;background:linear-gradient(90deg,transparent 50%,#cc6600 50%);background-size:2px 1px"></i><i style="left:924px;top:128px;width:63px;height:1px;background:linear-gradient(90deg,transparent 50%,#cc6600 50%);background-size:2px 1px"></i><i style="left:924px;top:142px;width:63px;height:1px;background:linear-gradient(90deg,transparent 50%,#cc6600 50%);background-size:2px 1px"></i><i style="left:28px;top:128px;width:1px;height:15px;background:linear-gradient(180deg,transparent 50%,#7fff00 50%);background-size:1px 2px"></i><i style="left:986px;top:128px;width:1px;height:15px;background:linear-gradient(180deg,transparent 50%,#cc6600 50%);background-size:1px 2px"></i><i style="left:0px;top:670px;width:995px;height:1px;background:#e3e3e3"></i><i style="left:0px;top:671px;width:995px;height:1px;background:#fff"></i><i style="left:0px;top:672px;width:995px;height:15px;background:#f0f0f0"></i><i style="left:0px;top:673px;width:995px;height:1px;background:#dcdcdc"></i><i style="left:0px;top:674px;width:995px;height:1px;background:#a0a0a0"></i><i style="left:0px;top:675px;width:995px;height:1px;background:#696969"></i><i style="left:0px;top:676px;width:995px;height:1px;background:#8a8a8a"></i><i style="left:0px;top:677px;width:995px;height:1px;background:#fff"></i><i style="left:81px;top:684px;width:42px;height:1px;background:#a0a0a0"></i><i style="left:81px;top:685px;width:42px;height:1px;background:#696969"></i><i style="left:81px;top:684px;width:1px;height:3px;background:#a0a0a0"></i><i style="left:82px;top:685px;width:1px;height:2px;background:#696969"></i><i style="left:83px;top:686px;width:39px;height:1px;background:#fff"></i>
</div></body></html>
